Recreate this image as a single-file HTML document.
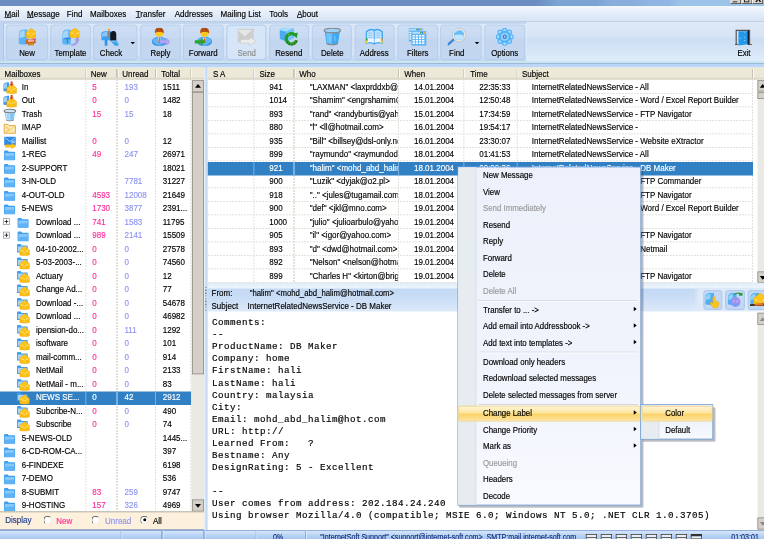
<!DOCTYPE html>
<html lang="en"><head><meta charset="utf-8"><title>Mail client</title>
<style>
html,body{margin:0;padding:0;background:#fff;overflow:hidden}
body{width:764px;height:539px;position:relative}
#app{position:absolute;left:0;top:0;width:1018.67px;height:718.67px;transform:scale(0.75);transform-origin:0 0;
 overflow:hidden;background:#bcd4f2;-webkit-text-stroke:0.22px currentColor;font-family:"Liberation Sans",sans-serif;font-size:11px;color:#000}
.abs{position:absolute;box-sizing:border-box}
.abs svg{display:block}
.titlebar{background:linear-gradient(90deg,#6b8cc0 0%,#6b8cc0 70%,#7ba4d4 73%,#7ba4d4 78%,#89aedc 80%,#89aedc 83%,#90b6e4 85%,#90b6e4 87.5%,#9cc4e9 89%,#9cc4e9 100%)}
.winbtn{background:#d6d2c8;border:1px solid #fff;border-right-color:#404040;border-bottom-color:#404040}
.menubar{background:linear-gradient(180deg,#f5f9fe 0%,#e6eefa 40%,#d8e4f4 93%,#afc3dd 96%)}
.mtxt{font-size:11.4px;transform:scaleX(.94);transform-origin:0 50%;white-space:nowrap;color:#000}
.toolbar{background:linear-gradient(180deg,#dfe9f7 0%,#d7e4f5 38%,#cedef2 41%,#d6e6f7 75%,#e0eefb 100%)}
.tbgroup{border-left:1px solid #a5c1e6;border-right:1px solid #e4eefa;border-radius:3px;background:linear-gradient(180deg,#c3d7f0 0,#bdd0e8 2.6px,#dee9f7 3px,#dce7f6 4.2px,#d9e5f5 38%,#d3e1f3 42%,#d6e3f5 80%,#c6d8ef 96%,#c3d5ec 100%)}
.tbgap{background:linear-gradient(180deg,#c6e9f0 0,#c6e9f0 1.5px,#9fb6d6 1.8px,#9fb6d6 3.2px,#bcd6fa 3.6px,#bcd6fa 100%)}
.tbtn{border:1px solid #a9c6ec;border-radius:4px;background:linear-gradient(180deg,#cddef4 0%,#c8daf3 36%,#c2d6f0 40%,#c4d7f1 100%)}
.tbtn.dis{background:#d6e5f7;border-color:#9fc3f0}
.tbtn.dis .tlabel{color:#8c8c8c}
.tlabel{font-size:11.4px;transform:scaleX(.92);transform-origin:50% 50%;text-align:center;white-space:nowrap;height:14px;line-height:14px}
.ticon{width:24px;height:24px}
.darr{width:0;height:0;border:3px solid transparent;border-top:3.6px solid #000;border-bottom:0}
.lhead{background:#ece9d8;border-bottom:1.4px solid #cbc7b8;box-shadow:inset 0 -2px 0 #e2dfcf}
.htxt,.rtxt{font-size:12.2px;transform:scaleX(.875);transform-origin:0 50%;white-space:nowrap}
.clip{overflow:hidden}
.cnew{color:#ff2d9b}
.cunr{color:#8d95f0}
.vdot{background:repeating-linear-gradient(180deg,#dad8ce 0,#dad8ce 2.6px,#fff 2.6px,#fff 4px)}
.hdot{background:repeating-linear-gradient(90deg,#dad8ce 0,#dad8ce 2.6px,#fff 2.6px,#fff 4px)}
.plus{border:1px solid #8a98ad;background:#fff}
.plus i{position:absolute;background:#000;display:block}
.sbtrack{background:#ebe9e4}
.sbbtn{background:#d4d0c8;border:1px solid #8c8a84}
.sbbtn b{position:absolute;left:2.5px;top:4.4px;width:0;height:0;border:4.3px solid transparent}
.sbbtn b.up{border-bottom:5.2px solid #000;border-top:0}
.sbbtn b.dn{border-top:5.2px solid #000;border-bottom:0;top:5px}
.dispbar{background:#fdf0dc;border-top:1.4px solid #9f9b8c;border-bottom:1.4px solid #4f6fae}
.dtxt{font-size:12.2px;transform:scaleX(.875);transform-origin:0 50%;white-space:nowrap}
.radio{border-radius:50%;background:#fff;border:1.4px solid #4a4a4a;border-right-color:#e4e0d4;border-bottom-color:#e4e0d4;transform:rotate(0deg)}
.radio i{position:absolute;left:2.2px;top:2.2px;width:4px;height:4px;border-radius:50%;background:#000;display:block}
.vsplit{background:linear-gradient(90deg,#eff4fb 0%,#d3e1f4 40%,#c6d9f1 65%,#dde8f6 100%)}
.hsplit{background:linear-gradient(180deg,#e3ecf6,#edf4fc)}
.msghead{background:linear-gradient(90deg,rgba(224,235,249,0) 87.3%,#dfeaf8 88.3%),linear-gradient(180deg,#c2d8f5 0%,#cbdef6 45%,#dce9f9 100%)}
.hbtn{border:1px solid #9cbce8;border-radius:3px;background:#c3d8f4}
.body{margin:0;font-family:"Liberation Mono",monospace;font-size:12.3px;letter-spacing:0.62px;line-height:16.05px;color:#000;white-space:pre}
.status{background:linear-gradient(180deg,#d6e6fa 0%,#bdd6f5 45%,#a4c6f1 100%);border-top:1px solid #7f9fd2}
.stxt{font-size:11.4px;transform:scaleX(.83);transform-origin:0 50%;white-space:nowrap;color:#15307a;line-height:13px}
.sicon{border:1px solid #333;background:#e8eef6}
.sicon i{position:absolute;left:0;top:3px;right:0;height:1px;background:#333;display:block}
.sicon.last{border-top-width:3px}
.mshadow{background:rgba(60,70,90,.35);border-radius:2px;filter:blur(1px)}
.cmenu{background:linear-gradient(180deg,#ecf1fb 0%,#eef3fc 50%,#f8fafe 100%);border:1.2px solid #6b9bd8}
.cgutter{background:#e6ecef;border-right:1px solid #d4dbe4}
.ctxt{font-size:11.4px;transform:scaleX(.92);transform-origin:0 50%;white-space:nowrap}
.carr{width:0;height:0;border:3.6px solid transparent;border-left:4px solid #000;border-right:0}
.chl{border:1px solid #f3cf73;border-radius:2px;background:linear-gradient(180deg,#fef5d4 0%,#fde59f 45%,#fbd367 55%,#fce4a0 100%)}

</style></head><body>
<div id="app">
<div class="abs titlebar" style="left:0px;top:0px;width:1018.67px;height:8.27px;"></div>
<div class="abs winbtn" style="left:974px;top:-8px;width:14px;height:13.33px;"></div>
<div class="abs winbtn" style="left:988.67px;top:-8px;width:14px;height:13.33px;"></div>
<div class="abs winbtn" style="left:1003.33px;top:-8px;width:14px;height:13.33px;"></div>
<div class="abs" style="left:977.33px;top:1.6px;width:6px;height:1.87px;background:#000"></div>
<div class="abs" style="left:992px;top:-4px;width:6.67px;height:7.47px;border:1px solid #000;box-sizing:border-box"></div>
<div class="abs" style="left:1007.33px;top:-7.33px;font:bold 11px 'Liberation Sans',sans-serif;color:#000">X</div>
<div class="abs menubar" style="left:0px;top:8px;width:1018.67px;height:20.93px;"></div>
<div class="abs mtxt" style="left:5.6px;top:9px;height:18px;line-height:18px"><u>M</u>ail</div>
<div class="abs mtxt" style="left:36px;top:9px;height:18px;line-height:18px"><u>M</u>essage</div>
<div class="abs mtxt" style="left:88.67px;top:9px;height:18px;line-height:18px">Find</div>
<div class="abs mtxt" style="left:120.4px;top:9px;height:18px;line-height:18px">Mailboxes</div>
<div class="abs mtxt" style="left:180.67px;top:9px;height:18px;line-height:18px"><u>T</u>ransfer</div>
<div class="abs mtxt" style="left:233.33px;top:9px;height:18px;line-height:18px">Addresses</div>
<div class="abs mtxt" style="left:294px;top:9px;height:18px;line-height:18px">Mailing List</div>
<div class="abs mtxt" style="left:359.07px;top:9px;height:18px;line-height:18px">Tools</div>
<div class="abs mtxt" style="left:396px;top:9px;height:18px;line-height:18px"><u>A</u>bout</div>
<div class="abs toolbar" style="left:0px;top:28.93px;width:1018.67px;height:53.33px;"></div>
<div class="abs" style="left:0px;top:28.93px;width:4.8px;height:53.33px;background:#bdd4f2"></div>
<div class="abs tbgroup" style="left:4.4px;top:28.93px;width:698.93px;height:53.33px;"></div>
<div class="abs tbgap" style="left:0px;top:82.27px;width:1018.67px;height:7.47px;"></div>
<div class="abs tbtn" style="left:8.4px;top:33.2px;width:55.2px;height:47.07px;"><div class="abs ticon" style="left:14.6px;top:2.67px"><svg width="24" height="24" viewBox="0 0 24 24"><path d="M2 5 Q4 2 8 2.2 L12 2.2 L12.6 22 Q7 23.5 1.2 21.6 Q.2 14 2 5Z" fill="#5cb4f5"/><path d="M2.6 6 Q5 3.2 9 3.4 L9 12 Q5 13 1.6 14Z" fill="#a2d7fb"/><path d="M11.000000000000002 5.949999999999999 L17.6 1.0 L24.200000000000003 5.949999999999999 L24.200000000000003 12.879999999999999 Q17.6 14.86 11.000000000000002 12.879999999999999 Z" fill="#fdc51c" stroke="#f2a900" stroke-width=".8"/><path d="M12.000000000000002 6.9399999999999995 L17.6 9.91 L23.200000000000003 6.9399999999999995" fill="none" stroke="#fde27a" stroke-width="1.3"/><path d="M12.200000000000001 12.549999999999999 L17.6 8.26 L23.000000000000004 12.549999999999999" fill="none" stroke="#f4a600" stroke-width="1"/><path d="M10 17 L13 14.5 L16.5 16 L20 14 L23 16.8 L24 20 L21 21.2 L20.5 24 L17 23 L14.5 24.5 L13.4 21.6 L10 21Z" fill="#c8691e"/><path d="M13 16 L21 15.5 L21.4 18.4 L13.4 19Z" fill="#f6b4a4"/><circle cx="22.6" cy="15.6" r="1.2" fill="#f020a0"/><circle cx="16" cy="21.4" r=".9" fill="#f8d020"/><circle cx="19" cy="21.8" r=".9" fill="#f8d020"/></svg></div><div class="abs tlabel" style="left:-13.4px;width:80px;top:29.73px">New</div></div>
<div class="abs tbtn" style="left:67.07px;top:33.2px;width:53.73px;height:47.07px;"><div class="abs ticon" style="left:13.87px;top:2.67px"><svg width="24" height="24" viewBox="0 0 24 24"><path d="M2 5 Q4 2 8 2.2 L12 2.2 L12.6 22 Q7 23.5 1.2 21.6 Q.2 14 2 5Z" fill="#5cb4f5"/><path d="M2.6 6 Q5 3.2 9 3.4 L9 12 Q5 13 1.6 14Z" fill="#a2d7fb"/><path d="M4 14.6h8M8 14.6v6" stroke="#2f86d8" stroke-width="1.6" fill="none"/><path d="M11.200000000000001 5.35 L17.8 0.40000000000000036 L24.4 5.35 L24.4 12.280000000000001 Q17.8 14.26 11.200000000000001 12.280000000000001 Z" fill="#fdc51c" stroke="#f2a900" stroke-width=".8"/><path d="M12.200000000000001 6.34 L17.8 9.309999999999999 L23.4 6.34" fill="none" stroke="#fde27a" stroke-width="1.3"/><path d="M12.4 11.95 L17.8 7.66 L23.2 11.95" fill="none" stroke="#f4a600" stroke-width="1"/><path d="M13 22.6 Q19 22 20.4 16.4 L18 16.6 L21.6 12.6 L24 17 L22.4 16.8 Q21.6 23.6 13.6 24.4Z" fill="#a89af0" stroke="#8f80e0" stroke-width=".5"/></svg></div><div class="abs tlabel" style="left:-14.13px;width:80px;top:29.73px">Template</div></div>
<div class="abs tbtn" style="left:124px;top:33.2px;width:59.47px;height:47.07px;"><div class="abs ticon" style="left:9.27px;top:2.67px"><svg width="24" height="24" viewBox="0 0 24 24"><path d="M1 9 Q1 4.6 6 4.6 L14 4.6 L14 16.6 L1.4 16.6Z" fill="#3f9ff0"/><path d="M2 9 Q2.4 5.8 6 5.6 L9 5.6 L9 11 L2 12Z" fill="#86c8fa"/><rect x="5.6" y="16" width="3.6" height="8.4" fill="#2f94ec"/><path d="M13 8 Q13.4 4.2 17.6 4.4 Q21 4.8 21 9 L21 17.4 L13 17.4Z" fill="#111820"/><path d="M13 17 L21 17 L26.5 22.4 Q23 25.6 19 24Z" fill="#3ea2f0"/><path d="M15 18 L20.4 18 L24.6 22.2" stroke="#9ad4fb" stroke-width="1" fill="none"/><rect x="10.6" y="1.2" width="1.5" height="11.6" fill="#e8641c"/><rect x="10.2" y=".2" width="2.4" height="2" fill="#f8d020"/></svg></div><div class="abs tlabel" style="left:-17.13px;width:80px;top:29.73px">Check</div><div class="abs darr" style="left:49.33px;top:21.6px"></div></div>
<div class="abs tbtn" style="left:186.8px;top:33.2px;width:54.13px;height:47.07px;"><div class="abs ticon" style="left:14.07px;top:2.67px"><svg width="24" height="24" viewBox="0 0 24 24"><ellipse cx="10.4" cy="18.4" rx="10" ry="6.4" fill="#2f8fe8"/><path d="M1.4 18 Q3 13 8.6 13 L10.4 20 L12.2 13 Q18 13 19.6 18 Q15 23 10.4 23 Q5 23 1.4 18Z" fill="#62b8f6"/><path d="M8.4 13 L12.4 13 L10.4 20Z" fill="#eaf4fd"/><path d="M9.8 13.4h1.4l.4 6-1.1 1.6-1.1-1.6z" fill="#e0641a"/><circle cx="10.4" cy="6.6" r="5.6" fill="#fdc81e"/><path d="M4.4 7.4 Q3.8 -.4 10.4 -.4 Q17.2 -.4 16.4 7.6 Q14 5 10.4 5.8 Q7 5 4.4 7.4Z" fill="#b8521a"/><circle cx="8" cy="2.6" r=".7" fill="#7a3a12"/><circle cx="12.4" cy="1.8" r=".7" fill="#7a3a12"/><circle cx="13.6" cy="4" r=".6" fill="#7a3a12"/><path d="M10.6 16.4 L19 16.4 L19 13.6 L25.6 18.6 L19 23.6 L19 20.8 L10.6 20.8Z" fill="#b0a4f4" stroke="#8f86e0" stroke-width=".6"/><rect x="10" y="15.6" width="1" height="6.4" fill="#8a8fa0"/></svg></div><div class="abs tlabel" style="left:-13.93px;width:80px;top:29.73px">Reply</div></div>
<div class="abs tbtn" style="left:244.4px;top:33.2px;width:53.87px;height:47.07px;"><div class="abs ticon" style="left:13.93px;top:2.67px"><svg width="24" height="24" viewBox="0 0 24 24"><g transform="translate(3.4 0)"><ellipse cx="10.4" cy="18.4" rx="10" ry="6.4" fill="#2f8fe8"/><path d="M1.4 18 Q3 13 8.6 13 L10.4 20 L12.2 13 Q18 13 19.6 18 Q15 23 10.4 23 Q5 23 1.4 18Z" fill="#62b8f6"/><path d="M8.4 13 L12.4 13 L10.4 20Z" fill="#eaf4fd"/><path d="M9.8 13.4h1.4l.4 6-1.1 1.6-1.1-1.6z" fill="#e0641a"/><circle cx="10.4" cy="6.6" r="5.6" fill="#fdc81e"/><path d="M4.4 7.4 Q3.8 -.4 10.4 -.4 Q17.2 -.4 16.4 7.6 Q14 5 10.4 5.8 Q7 5 4.4 7.4Z" fill="#b8521a"/><circle cx="8" cy="2.6" r=".7" fill="#7a3a12"/><circle cx="12.4" cy="1.8" r=".7" fill="#7a3a12"/><circle cx="13.6" cy="4" r=".6" fill="#7a3a12"/></g><path d="M.6 16.6 L8.6 16.6 L8.6 13.8 L15.2 18.8 L8.6 23.8 L8.6 21 L.6 21Z" fill="#27a82a"/><circle cx="9" cy="18.8" r=".7" fill="#8a5a2a"/><circle cx="11.6" cy="17.4" r=".6" fill="#8a5a2a"/></svg></div><div class="abs tlabel" style="left:-14.07px;width:80px;top:29.73px">Forward</div></div>
<div class="abs tbtn dis" style="left:301.73px;top:33.2px;width:53.6px;height:47.07px;"><div class="abs ticon" style="left:13.8px;top:2.67px"><svg width="24" height="24" viewBox="0 0 24 24"><path d="M-2.4 2 L21.2 2 L21.2 19.6 L-2.4 19.6Z" fill="#cfcfcf"/><path d="M-2.4 2 L9.4 12.4 L21.2 2Z" fill="#e6e6e6" stroke="#bcbcbc" stroke-width=".8"/><path d="M-2.4 19.6 L7 10.6M21.2 19.6 L12 10.6" stroke="#bdbdbd" stroke-width=".8"/><path d="M3.6 15.6 L15.6 15.6 L15.6 12 L24.4 18 L15.6 24 L15.6 20.4 L3.6 20.4Z" fill="#ececec" stroke="#c4c4c4" stroke-width=".7"/></svg></div><div class="abs tlabel" style="left:-14.2px;width:80px;top:29.73px">Send</div></div>
<div class="abs tbtn" style="left:358.67px;top:33.2px;width:53.6px;height:47.07px;"><div class="abs ticon" style="left:13.8px;top:2.67px"><svg width="24" height="24" viewBox="0 0 24 24"><path d="M-1.4 2.4 L7 -.8 L18.6 1 L18.6 14 L8.6 18.4 L-.4 14.6Z" fill="#4aaaf3"/><path d="M-1.4 2.4 L8.4 5.4 L18.6 1 L7 -.8Z" fill="#a6dbfc"/><path d="M8.4 5.4 L8.6 18.4 L18.6 14 L18.6 1Z" fill="#74c4f9"/><path d="M20.4 9.6 A7 7 0 1 0 22.4 16.6" fill="none" stroke="#1f9c2a" stroke-width="4.4"/><path d="M16.4 8.2 L24.4 6.4 L22.6 14Z" fill="#1f9c2a"/><circle cx="10" cy="19.6" r=".8" fill="#5a3a1a"/><circle cx="12.6" cy="22.4" r=".8" fill="#5a3a1a"/><circle cx="16.4" cy="23.2" r=".8" fill="#5a3a1a"/><circle cx="20" cy="21.6" r=".8" fill="#5a3a1a"/><circle cx="22.6" cy="18.6" r=".8" fill="#5a3a1a"/><circle cx="12" cy="9" r=".7" fill="#c8e020"/></svg></div><div class="abs tlabel" style="left:-14.2px;width:80px;top:29.73px">Resend</div></div>
<div class="abs tbtn" style="left:416px;top:33.2px;width:53.07px;height:47.07px;"><div class="abs ticon" style="left:13.53px;top:2.67px"><svg width="24" height="24" viewBox="0 0 24 24"><path d="M1.6 3.6 L22.4 3.6 L19.6 21.4 Q12 24.6 4.4 21.4Z" fill="#40a8f2"/><path d="M3.6 6 L12 7 L11.4 22 Q7 21.6 5 20.6Z" fill="#6cc2f8"/><ellipse cx="12" cy="3.6" rx="11" ry="3" fill="#9ad4fa" stroke="#8a8a8a" stroke-width="1.7"/><path d="M4.4 20.8 Q12 24.8 19.6 20.8" stroke="#8a8a8a" stroke-width="1.8" fill="none"/><path d="M8.4 10.4v8M15.6 10.4v8" stroke="#8fd0fa" stroke-width="1"/></svg></div><div class="abs tlabel" style="left:-14.47px;width:80px;top:29.73px">Delete</div></div>
<div class="abs tbtn" style="left:472.53px;top:33.2px;width:53.6px;height:47.07px;"><div class="abs ticon" style="left:13.8px;top:2.67px"><svg width="24" height="24" viewBox="0 0 24 24"><path d="M.6 5 Q6 -.6 12 2.4 Q18 -.6 23.6 5 L23.6 21.6 Q18 19.6 12 22.4 Q6 19.6 .6 21.6Z" fill="#3fa4f2"/><path d="M2.2 6 Q7 1.6 11.4 4.4 L11.4 20 Q7 18.4 2.2 19.6Z" fill="#c2e0fa"/><path d="M21.8 6 Q17 1.6 12.6 4.4 L12.6 20 Q17 18.4 21.8 19.6Z" fill="#c2e0fa"/><path d="M2.2 14 L11.4 15 L11.4 20 Q7 18.4 2.2 19.6Z" fill="#eef7fe"/><path d="M21.8 14 L12.6 15 L12.6 20 Q17 18.4 21.8 19.6Z" fill="#eef7fe"/><path d="M4 7h5M4 10h5M4 13h5M15 7h5M15 10h5M15 13h5" stroke="#8cc6f7" stroke-width="1.2"/><rect x=".8" y="14" width="2.4" height="3.4" fill="#28a838"/><rect x=".8" y="17.2" width="2.6" height="3.4" fill="#fcd21c"/><rect x="20.8" y="14" width="2.4" height="3.4" fill="#f09a1c"/><rect x="20.6" y="17.2" width="2.6" height="3.4" fill="#fcd21c"/></svg></div><div class="abs tlabel" style="left:-14.2px;width:80px;top:29.73px">Address</div></div>
<div class="abs tbtn" style="left:529.6px;top:33.2px;width:54px;height:47.07px;"><div class="abs ticon" style="left:14px;top:2.67px"><svg width="24" height="24" viewBox="0 0 24 24"><rect x="-0.6" y="0.2" width="19" height="18" rx="1" fill="#56b2f6"/><rect x="0.4" y="1.2" width="17" height="2.6" fill="#b6defc"/><rect x="9.999999999999998" y="1.4" width="1.8" height="2" fill="#2ca03c"/><rect x="12.599999999999998" y="1.4" width="1.6" height="2" fill="#2468d8"/><rect x="14.999999999999998" y="1.4" width="1.8" height="2" fill="#f0a020"/><rect x="0.90" y="5.40" width="2.80" height="1.80" fill="#fff"/><rect x="4.90" y="5.40" width="2.80" height="1.80" fill="#fff"/><rect x="8.90" y="5.40" width="2.80" height="1.80" fill="#fff"/><rect x="12.90" y="5.40" width="2.80" height="1.80" fill="#fff"/><rect x="0.90" y="8.30" width="2.80" height="1.80" fill="#fff"/><rect x="4.90" y="8.30" width="2.80" height="1.80" fill="#fff"/><rect x="8.90" y="8.30" width="2.80" height="1.80" fill="#fff"/><rect x="12.90" y="8.30" width="2.80" height="1.80" fill="#fff"/><rect x="0.90" y="11.20" width="2.80" height="1.80" fill="#fff"/><rect x="4.90" y="11.20" width="2.80" height="1.80" fill="#fff"/><rect x="8.90" y="11.20" width="2.80" height="1.80" fill="#fff"/><rect x="12.90" y="11.20" width="2.80" height="1.80" fill="#fff"/><rect x="0.90" y="14.10" width="2.80" height="1.80" fill="#fff"/><rect x="4.90" y="14.10" width="2.80" height="1.80" fill="#fff"/><rect x="8.90" y="14.10" width="2.80" height="1.80" fill="#fff"/><rect x="12.90" y="14.10" width="2.80" height="1.80" fill="#fff"/><rect x="3.6" y="4.4" width="20" height="19.6" rx="1" fill="#56b2f6"/><rect x="4.6" y="5.4" width="18" height="2.6" fill="#b6defc"/><rect x="15.200000000000001" y="5.6000000000000005" width="1.8" height="2" fill="#2ca03c"/><rect x="17.8" y="5.6000000000000005" width="1.6" height="2" fill="#2468d8"/><rect x="20.200000000000003" y="5.6000000000000005" width="1.8" height="2" fill="#f0a020"/><rect x="5.10" y="9.60" width="3.05" height="2.20" fill="#fff"/><rect x="9.35" y="9.60" width="3.05" height="2.20" fill="#fff"/><rect x="13.60" y="9.60" width="3.05" height="2.20" fill="#fff"/><rect x="17.85" y="9.60" width="3.05" height="2.20" fill="#fff"/><rect x="5.10" y="12.90" width="3.05" height="2.20" fill="#fff"/><rect x="9.35" y="12.90" width="3.05" height="2.20" fill="#fff"/><rect x="13.60" y="12.90" width="3.05" height="2.20" fill="#fff"/><rect x="17.85" y="12.90" width="3.05" height="2.20" fill="#fff"/><rect x="5.10" y="16.20" width="3.05" height="2.20" fill="#fff"/><rect x="9.35" y="16.20" width="3.05" height="2.20" fill="#fff"/><rect x="13.60" y="16.20" width="3.05" height="2.20" fill="#fff"/><rect x="17.85" y="16.20" width="3.05" height="2.20" fill="#fff"/><rect x="5.10" y="19.50" width="3.05" height="2.20" fill="#fff"/><rect x="9.35" y="19.50" width="3.05" height="2.20" fill="#fff"/><rect x="13.60" y="19.50" width="3.05" height="2.20" fill="#fff"/><rect x="17.85" y="19.50" width="3.05" height="2.20" fill="#fff"/></svg></div><div class="abs tlabel" style="left:-14px;width:80px;top:29.73px">Filters</div></div>
<div class="abs tbtn" style="left:587.2px;top:33.2px;width:54.8px;height:47.07px;"><div class="abs ticon" style="left:9px;top:2.67px"><svg width="24" height="24" viewBox="0 0 24 24"><path d="M9.4 14.4 L-1 23.6" stroke="#c4c8d0" stroke-width="4.6" stroke-linecap="round"/><path d="M8.4 15.4 L-.6 23.2" stroke="#2f86e0" stroke-width="2.6" stroke-linecap="round"/><circle cx="15" cy="9.4" r="8.8" fill="#f0f0f0" stroke="#b8b8b8" stroke-width=".9"/><circle cx="15" cy="9.4" r="6.9" fill="#6cbcf7"/><path d="M8.4 10.4 Q15 7.4 21.6 10.4 Q20.4 16 15 16.3 Q9.6 16 8.4 10.4Z" fill="#c2e5fc"/><path d="M9.6 6.2 Q12 2.8 16 2.8" stroke="#b4defb" stroke-width="1.4" fill="none"/></svg></div><div class="abs tlabel" style="left:-19px;width:80px;top:29.73px">Find</div><div class="abs darr" style="left:44.67px;top:21.6px"></div></div>
<div class="abs tbtn" style="left:645.87px;top:33.2px;width:54.13px;height:47.07px;"><div class="abs ticon" style="left:14.07px;top:2.67px"><svg width="24" height="24" viewBox="0 0 24 24"><circle cx="20.60" cy="12.00" r="3.5" fill="#4fb0f6"/><circle cx="20.60" cy="12.00" r="1.9" fill="#b4e0fc"/><circle cx="18.08" cy="18.08" r="3.5" fill="#4fb0f6"/><circle cx="18.08" cy="18.08" r="1.9" fill="#b4e0fc"/><circle cx="12.00" cy="20.60" r="3.5" fill="#4fb0f6"/><circle cx="12.00" cy="20.60" r="1.9" fill="#b4e0fc"/><circle cx="5.92" cy="18.08" r="3.5" fill="#4fb0f6"/><circle cx="5.92" cy="18.08" r="1.9" fill="#b4e0fc"/><circle cx="3.40" cy="12.00" r="3.5" fill="#4fb0f6"/><circle cx="3.40" cy="12.00" r="1.9" fill="#b4e0fc"/><circle cx="5.92" cy="5.92" r="3.5" fill="#4fb0f6"/><circle cx="5.92" cy="5.92" r="1.9" fill="#b4e0fc"/><circle cx="12.00" cy="3.40" r="3.5" fill="#4fb0f6"/><circle cx="12.00" cy="3.40" r="1.9" fill="#b4e0fc"/><circle cx="18.08" cy="5.92" r="3.5" fill="#4fb0f6"/><circle cx="18.08" cy="5.92" r="1.9" fill="#b4e0fc"/><circle cx="12" cy="12" r="8" fill="#4fb0f6"/><circle cx="12" cy="12" r="5.4" fill="#96d0fa"/><circle cx="12" cy="12" r="3" fill="#2f8ee8"/><circle cx="12" cy="12" r="1.2" fill="#c8c0c0"/></svg></div><div class="abs tlabel" style="left:-13.93px;width:80px;top:29.73px">Options</div></div>
<div class="abs ticon" style="left:979.2px;top:38px"><svg width="24" height="24" viewBox="0 0 24 24"><path d="M2.6 22 L2.6 2.6 L20.4 2.6 L20.4 22" fill="none" stroke="#555" stroke-width="1.6"/><path d="M1 21.4h4M18.4 21.4h5" stroke="#555" stroke-width="1.4"/><path d="M5.6 3.6 L18.6 3.6 L18.6 21 L5.6 22.6Z" fill="#2298ea"/><rect x="17.8" y="2.6" width="1.8" height="19" fill="#0a1a2a"/><circle cx="8" cy="13" r=".7" fill="#bfe4fc"/><circle cx="14" cy="11.6" r=".7" fill="#bfe4fc"/><circle cx="14" cy="16" r=".7" fill="#bfe4fc"/><circle cx="13.6" cy="5.6" r=".6" fill="#bfe4fc"/></svg></div>
<div class="abs tlabel" style="left:952px;width:80px;top:63.2px">Exit</div>
<div class="abs" style="left:0px;top:89.73px;width:272px;height:592.27px;background:#fff"></div>
<div class="abs lhead" style="left:0px;top:89.73px;width:272px;height:16.4px;"></div>
<div class="abs htxt" style="left:6.13px;top:89px;height:18px;line-height:18px">Mailboxes</div>
<div class="abs htxt" style="left:121.33px;top:89px;height:18px;line-height:18px">New</div>
<div class="abs htxt" style="left:163.47px;top:89px;height:18px;line-height:18px">Unread</div>
<div class="abs htxt" style="left:215.33px;top:89px;height:18px;line-height:18px">Toltal</div>
<div class="abs" style="left:114.4px;top:92px;width:1.07px;height:12px;background:#b9b6a6"></div>
<div class="abs" style="left:115.47px;top:92px;width:0.93px;height:12px;background:#fff"></div>
<div class="abs vdot" style="left:114.4px;top:106.4px;width:1.07px;height:575.6px;"></div>
<div class="abs" style="left:155.47px;top:92px;width:1.07px;height:12px;background:#b9b6a6"></div>
<div class="abs" style="left:156.53px;top:92px;width:0.93px;height:12px;background:#fff"></div>
<div class="abs vdot" style="left:155.47px;top:106.4px;width:1.07px;height:575.6px;"></div>
<div class="abs" style="left:206.67px;top:92px;width:1.07px;height:12px;background:#b9b6a6"></div>
<div class="abs" style="left:207.73px;top:92px;width:0.93px;height:12px;background:#fff"></div>
<div class="abs vdot" style="left:206.67px;top:106.4px;width:1.07px;height:575.6px;"></div>
<div class="abs" style="left:254.13px;top:92px;width:1.07px;height:12px;background:#b9b6a6"></div>
<div class="abs" style="left:255.2px;top:92px;width:0.93px;height:12px;background:#fff"></div>
<div class="abs vdot" style="left:254.13px;top:106.4px;width:1.07px;height:575.6px;"></div>
<div class="abs" style="left:4.4px;top:107.6px;width:18.4px;height:18.4px"><svg width="100%" height="100%" viewBox="0 0 16 16"><path d="M.6 3.6 Q2 1.4 5 1.4 L7 1.4 L7 12 Q3.6 12.6 .4 11.6Z" fill="#3f9cf0"/><path d="M1.2 4.2 Q2.4 2.6 4.6 2.4 L4.6 8 L.9 9Z" fill="#9ad2fa"/><path d="M4.4 8.08 L10 3.5999999999999996 L15.6 8.08 L15.6 13.959999999999999 Q10 15.36 4.4 13.959999999999999Z" fill="#fdc51c" stroke="#f0a400" stroke-width=".6"/><path d="M5.2 13.12 L10 9.479999999999999 L14.799999999999999 13.12" fill="none" stroke="#f3a800" stroke-width=".9"/><path d="M5.2 8.639999999999999 L10 10.879999999999999 L14.799999999999999 8.639999999999999" fill="none" stroke="#fde68a" stroke-width=".9"/><path d="M8.8 .6h2.4v2.8h1.4l-2.6 2.8-2.6-2.8h1.4z" fill="#d8481c"/></svg></div>
<div class="abs rtxt " style="left:29.33px;top:107px;height:18px;line-height:18px">In</div>
<div class="abs rtxt cnew" style="left:123.2px;top:107px;height:18px;line-height:18px">5</div>
<div class="abs rtxt cunr" style="left:165.6px;top:107px;height:18px;line-height:18px">193</div>
<div class="abs rtxt " style="left:216.53px;top:107px;height:18px;line-height:18px">1511</div>
<div class="abs" style="left:4.4px;top:125.6px;width:18.4px;height:18.4px"><svg width="100%" height="100%" viewBox="0 0 16 16"><path d="M.6 3.6 Q2 1.4 5 1.4 L7 1.4 L7 12 Q3.6 12.6 .4 11.6Z" fill="#3f9cf0"/><path d="M1.2 4.2 Q2.4 2.6 4.6 2.4 L4.6 8 L.9 9Z" fill="#9ad2fa"/><path d="M4.4 8.08 L10 3.5999999999999996 L15.6 8.08 L15.6 13.959999999999999 Q10 15.36 4.4 13.959999999999999Z" fill="#fdc51c" stroke="#f0a400" stroke-width=".6"/><path d="M5.2 13.12 L10 9.479999999999999 L14.799999999999999 13.12" fill="none" stroke="#f3a800" stroke-width=".9"/><path d="M5.2 8.639999999999999 L10 10.879999999999999 L14.799999999999999 8.639999999999999" fill="none" stroke="#fde68a" stroke-width=".9"/><path d="M8.8 .6h2.4v2.8h1.4l-2.6 2.8-2.6-2.8h1.4z" fill="#d8481c"/></svg></div>
<div class="abs rtxt " style="left:29.33px;top:124px;height:18px;line-height:18px">Out</div>
<div class="abs rtxt cnew" style="left:123.2px;top:124px;height:18px;line-height:18px">0</div>
<div class="abs rtxt cunr" style="left:165.6px;top:124px;height:18px;line-height:18px">0</div>
<div class="abs rtxt " style="left:216.53px;top:124px;height:18px;line-height:18px">1482</div>
<div class="abs" style="left:4.4px;top:143.6px;width:18.4px;height:18.4px"><svg width="100%" height="100%" viewBox="0 0 16 16"><path d="M1.6 3.4 L14.4 3.4 L12.6 14 Q8 16 3.4 14Z" fill="#8cccf8"/><path d="M3 5.6 L8 6.2 L7.6 14.6 Q5 14.2 3.8 13.6Z" fill="#bfe3fb"/><ellipse cx="8" cy="3.4" rx="6.8" ry="2" fill="#cfe9fc" stroke="#7c7c7c" stroke-width="1.2"/><path d="M3.4 13.8 Q8 16.2 12.6 13.8" stroke="#8a8a8a" stroke-width="1.2" fill="none"/><path d="M5.8 7v5.6M10.2 7v5.6" stroke="#5fb2f4" stroke-width=".8"/></svg></div>
<div class="abs rtxt " style="left:29.33px;top:143px;height:18px;line-height:18px">Trash</div>
<div class="abs rtxt cnew" style="left:123.2px;top:143px;height:18px;line-height:18px">15</div>
<div class="abs rtxt cunr" style="left:165.6px;top:143px;height:18px;line-height:18px">15</div>
<div class="abs rtxt " style="left:216.53px;top:143px;height:18px;line-height:18px">18</div>
<div class="abs" style="left:4.4px;top:161.6px;width:18.4px;height:18.4px"><svg width="100%" height="100%" viewBox="0 0 16 16"><path d="M1.4 3.2 L5.6 3.2 L7 4.8 L14.4 4.8 L14.4 13.6 L1.4 13.6Z" fill="#fbeab0" stroke="#e9a63a" stroke-width="1.1"/><path d="M3 6.4 L8 9.6 L3 12.4" fill="none" stroke="#f0b64c" stroke-width="1"/><path d="M8 9.6 L14 5.6" stroke="#f3c873" stroke-width=".9"/></svg></div>
<div class="abs rtxt " style="left:29.33px;top:160px;height:18px;line-height:18px">IMAP</div>
<div class="abs" style="left:4.4px;top:179.6px;width:18.4px;height:18.4px"><svg width="100%" height="100%" viewBox="0 0 16 16"><rect x="1.4" y="2" width="13.4" height="10" rx="1" fill="#2b8aea"/><path d="M2.4 3.2 L8.2 7.6 L13.8 3.2" fill="none" stroke="#9bd0fb" stroke-width="1.1"/><rect x="9.6" y="6.4" width="4.4" height="3" fill="#8cc6f8"/><path d="M2.6 11.4h7.4v-2.2l5 3.6-5 3.6v-2.2h-7.4z" fill="#fcc61c" stroke="#e8a400" stroke-width=".5"/></svg></div>
<div class="abs rtxt " style="left:29.33px;top:179px;height:18px;line-height:18px">Maillist</div>
<div class="abs rtxt cnew" style="left:123.2px;top:179px;height:18px;line-height:18px">0</div>
<div class="abs rtxt cunr" style="left:165.6px;top:179px;height:18px;line-height:18px">0</div>
<div class="abs rtxt " style="left:216.53px;top:179px;height:18px;line-height:18px">12</div>
<div class="abs" style="left:4.4px;top:197.6px;width:18.4px;height:18.4px"><svg width="100%" height="100%" viewBox="0 0 16 16"><g transform="translate(.3 .6) scale(.94)"><path d="M1 3 Q1 1.8 2.2 1.8 L5.4 1.8 L6.8 3.4 L13.4 3.4 Q14.6 3.4 14.6 4.6 L14.6 12.8 Q14.6 14 13.4 14 L2.2 14 Q1 14 1 12.8Z" fill="#3f9ef0"/><path d="M2 5 L13.6 5 L13.6 12.6 Q13.6 13 13.2 13 L2.4 13 Q2 13 2 12.6Z" fill="#86c9f9"/><path d="M2 9 L13.6 8 L13.6 12.6 Q13.6 13 13.2 13 L2.4 13 Q2 13 2 12.6Z" fill="#5fb3f5"/></g></svg></div>
<div class="abs rtxt " style="left:29.33px;top:196px;height:18px;line-height:18px">1-REG</div>
<div class="abs rtxt cnew" style="left:123.2px;top:196px;height:18px;line-height:18px">49</div>
<div class="abs rtxt cunr" style="left:165.6px;top:196px;height:18px;line-height:18px">247</div>
<div class="abs rtxt " style="left:216.53px;top:196px;height:18px;line-height:18px">26971</div>
<div class="abs" style="left:4.4px;top:215.6px;width:18.4px;height:18.4px"><svg width="100%" height="100%" viewBox="0 0 16 16"><g transform="translate(.3 .6) scale(.94)"><path d="M1 3 Q1 1.8 2.2 1.8 L5.4 1.8 L6.8 3.4 L13.4 3.4 Q14.6 3.4 14.6 4.6 L14.6 12.8 Q14.6 14 13.4 14 L2.2 14 Q1 14 1 12.8Z" fill="#3f9ef0"/><path d="M2 5 L13.6 5 L13.6 12.6 Q13.6 13 13.2 13 L2.4 13 Q2 13 2 12.6Z" fill="#86c9f9"/><path d="M2 9 L13.6 8 L13.6 12.6 Q13.6 13 13.2 13 L2.4 13 Q2 13 2 12.6Z" fill="#5fb3f5"/></g></svg></div>
<div class="abs rtxt " style="left:29.33px;top:215px;height:18px;line-height:18px">2-SUPPORT</div>
<div class="abs rtxt " style="left:216.53px;top:215px;height:18px;line-height:18px">18021</div>
<div class="abs" style="left:4.4px;top:233.6px;width:18.4px;height:18.4px"><svg width="100%" height="100%" viewBox="0 0 16 16"><g transform="translate(.3 .6) scale(.94)"><path d="M1 3 Q1 1.8 2.2 1.8 L5.4 1.8 L6.8 3.4 L13.4 3.4 Q14.6 3.4 14.6 4.6 L14.6 12.8 Q14.6 14 13.4 14 L2.2 14 Q1 14 1 12.8Z" fill="#3f9ef0"/><path d="M2 5 L13.6 5 L13.6 12.6 Q13.6 13 13.2 13 L2.4 13 Q2 13 2 12.6Z" fill="#86c9f9"/><path d="M2 9 L13.6 8 L13.6 12.6 Q13.6 13 13.2 13 L2.4 13 Q2 13 2 12.6Z" fill="#5fb3f5"/></g></svg></div>
<div class="abs rtxt " style="left:29.33px;top:232px;height:18px;line-height:18px">3-IN-OLD</div>
<div class="abs rtxt cunr" style="left:165.6px;top:232px;height:18px;line-height:18px">7781</div>
<div class="abs rtxt " style="left:216.53px;top:232px;height:18px;line-height:18px">31227</div>
<div class="abs" style="left:4.4px;top:251.6px;width:18.4px;height:18.4px"><svg width="100%" height="100%" viewBox="0 0 16 16"><g transform="translate(.3 .6) scale(.94)"><path d="M1 3 Q1 1.8 2.2 1.8 L5.4 1.8 L6.8 3.4 L13.4 3.4 Q14.6 3.4 14.6 4.6 L14.6 12.8 Q14.6 14 13.4 14 L2.2 14 Q1 14 1 12.8Z" fill="#3f9ef0"/><path d="M2 5 L13.6 5 L13.6 12.6 Q13.6 13 13.2 13 L2.4 13 Q2 13 2 12.6Z" fill="#86c9f9"/><path d="M2 9 L13.6 8 L13.6 12.6 Q13.6 13 13.2 13 L2.4 13 Q2 13 2 12.6Z" fill="#5fb3f5"/></g></svg></div>
<div class="abs rtxt " style="left:29.33px;top:251px;height:18px;line-height:18px">4-OUT-OLD</div>
<div class="abs rtxt cnew" style="left:123.2px;top:251px;height:18px;line-height:18px">4593</div>
<div class="abs rtxt cunr" style="left:165.6px;top:251px;height:18px;line-height:18px">12008</div>
<div class="abs rtxt " style="left:216.53px;top:251px;height:18px;line-height:18px">21649</div>
<div class="abs" style="left:4.4px;top:269.6px;width:18.4px;height:18.4px"><svg width="100%" height="100%" viewBox="0 0 16 16"><g transform="translate(.3 .6) scale(.94)"><path d="M1 3 Q1 1.8 2.2 1.8 L5.4 1.8 L6.8 3.4 L13.4 3.4 Q14.6 3.4 14.6 4.6 L14.6 12.8 Q14.6 14 13.4 14 L2.2 14 Q1 14 1 12.8Z" fill="#3f9ef0"/><path d="M2 5 L13.6 5 L13.6 12.6 Q13.6 13 13.2 13 L2.4 13 Q2 13 2 12.6Z" fill="#86c9f9"/><path d="M2 9 L13.6 8 L13.6 12.6 Q13.6 13 13.2 13 L2.4 13 Q2 13 2 12.6Z" fill="#5fb3f5"/></g></svg></div>
<div class="abs rtxt " style="left:29.33px;top:268px;height:18px;line-height:18px">5-NEWS</div>
<div class="abs rtxt cnew" style="left:123.2px;top:268px;height:18px;line-height:18px">1730</div>
<div class="abs rtxt cunr" style="left:165.6px;top:268px;height:18px;line-height:18px">3877</div>
<div class="abs rtxt " style="left:216.53px;top:268px;height:18px;line-height:18px">2391...</div>
<div class="abs" style="left:22.4px;top:287.6px;width:18.4px;height:18.4px"><svg width="100%" height="100%" viewBox="0 0 16 16"><g transform="translate(.3 .6) scale(.94)"><path d="M1 3 Q1 1.8 2.2 1.8 L5.4 1.8 L6.8 3.4 L13.4 3.4 Q14.6 3.4 14.6 4.6 L14.6 12.8 Q14.6 14 13.4 14 L2.2 14 Q1 14 1 12.8Z" fill="#3f9ef0"/><path d="M2 5 L13.6 5 L13.6 12.6 Q13.6 13 13.2 13 L2.4 13 Q2 13 2 12.6Z" fill="#86c9f9"/><path d="M2 9 L13.6 8 L13.6 12.6 Q13.6 13 13.2 13 L2.4 13 Q2 13 2 12.6Z" fill="#5fb3f5"/></g></svg></div>
<div class="abs plus" style="left:4.4px;top:291.47px;width:8.8px;height:8.8px;"><i style="left:1px;top:2.9px;width:4.8px;height:1px"></i><i style="left:2.9px;top:1px;width:1px;height:4.8px"></i></div>
<div class="abs rtxt " style="left:47.73px;top:287px;height:18px;line-height:18px">Download ...</div>
<div class="abs rtxt cnew" style="left:123.2px;top:287px;height:18px;line-height:18px">741</div>
<div class="abs rtxt cunr" style="left:165.6px;top:287px;height:18px;line-height:18px">1583</div>
<div class="abs rtxt " style="left:216.53px;top:287px;height:18px;line-height:18px">11795</div>
<div class="abs" style="left:22.4px;top:305.6px;width:18.4px;height:18.4px"><svg width="100%" height="100%" viewBox="0 0 16 16"><g transform="translate(.3 .6) scale(.94)"><path d="M1 3 Q1 1.8 2.2 1.8 L5.4 1.8 L6.8 3.4 L13.4 3.4 Q14.6 3.4 14.6 4.6 L14.6 12.8 Q14.6 14 13.4 14 L2.2 14 Q1 14 1 12.8Z" fill="#3f9ef0"/><path d="M2 5 L13.6 5 L13.6 12.6 Q13.6 13 13.2 13 L2.4 13 Q2 13 2 12.6Z" fill="#86c9f9"/><path d="M2 9 L13.6 8 L13.6 12.6 Q13.6 13 13.2 13 L2.4 13 Q2 13 2 12.6Z" fill="#5fb3f5"/></g></svg></div>
<div class="abs plus" style="left:4.4px;top:309.47px;width:8.8px;height:8.8px;"><i style="left:1px;top:2.9px;width:4.8px;height:1px"></i><i style="left:2.9px;top:1px;width:1px;height:4.8px"></i></div>
<div class="abs rtxt " style="left:47.73px;top:304px;height:18px;line-height:18px">Download ...</div>
<div class="abs rtxt cnew" style="left:123.2px;top:304px;height:18px;line-height:18px">989</div>
<div class="abs rtxt cunr" style="left:165.6px;top:304px;height:18px;line-height:18px">2141</div>
<div class="abs rtxt " style="left:216.53px;top:304px;height:18px;line-height:18px">15509</div>
<div class="abs" style="left:22.4px;top:323.6px;width:18.4px;height:18.4px"><svg width="100%" height="100%" viewBox="0 0 16 16"><path d="M.6 2.4 Q.6 1.2 1.8 1.2 L4.8 1.2 L6 2.8 L12 2.8 Q13 2.8 13 4 L13 11 L.6 11Z" fill="#3f9ef0"/><path d="M1.6 4.2 L12 4.2 L12 10 L1.6 10Z" fill="#a4d6fa"/><path d="M3.9000000000000004 8.1 L9.4 3.6999999999999993 L14.9 8.1 L14.9 13.875 Q9.4 15.25 3.9000000000000004 13.875Z" fill="#fdc51c" stroke="#f0a400" stroke-width=".6"/><path d="M4.7 13.049999999999999 L9.4 9.475 L14.1 13.049999999999999" fill="none" stroke="#f3a800" stroke-width=".9"/><path d="M4.7 8.649999999999999 L9.4 10.85 L14.1 8.649999999999999" fill="none" stroke="#fde68a" stroke-width=".9"/></svg></div>
<div class="abs rtxt " style="left:47.73px;top:323px;height:18px;line-height:18px">04-10-2002...</div>
<div class="abs rtxt cnew" style="left:123.2px;top:323px;height:18px;line-height:18px">0</div>
<div class="abs rtxt cunr" style="left:165.6px;top:323px;height:18px;line-height:18px">0</div>
<div class="abs rtxt " style="left:216.53px;top:323px;height:18px;line-height:18px">27578</div>
<div class="abs" style="left:22.4px;top:341.6px;width:18.4px;height:18.4px"><svg width="100%" height="100%" viewBox="0 0 16 16"><path d="M.6 2.4 Q.6 1.2 1.8 1.2 L4.8 1.2 L6 2.8 L12 2.8 Q13 2.8 13 4 L13 11 L.6 11Z" fill="#3f9ef0"/><path d="M1.6 4.2 L12 4.2 L12 10 L1.6 10Z" fill="#a4d6fa"/><path d="M3.9000000000000004 8.1 L9.4 3.6999999999999993 L14.9 8.1 L14.9 13.875 Q9.4 15.25 3.9000000000000004 13.875Z" fill="#fdc51c" stroke="#f0a400" stroke-width=".6"/><path d="M4.7 13.049999999999999 L9.4 9.475 L14.1 13.049999999999999" fill="none" stroke="#f3a800" stroke-width=".9"/><path d="M4.7 8.649999999999999 L9.4 10.85 L14.1 8.649999999999999" fill="none" stroke="#fde68a" stroke-width=".9"/></svg></div>
<div class="abs rtxt " style="left:47.73px;top:340px;height:18px;line-height:18px">5-03-2003-...</div>
<div class="abs rtxt cnew" style="left:123.2px;top:340px;height:18px;line-height:18px">0</div>
<div class="abs rtxt cunr" style="left:165.6px;top:340px;height:18px;line-height:18px">0</div>
<div class="abs rtxt " style="left:216.53px;top:340px;height:18px;line-height:18px">74560</div>
<div class="abs" style="left:22.4px;top:359.6px;width:18.4px;height:18.4px"><svg width="100%" height="100%" viewBox="0 0 16 16"><path d="M.6 2.4 Q.6 1.2 1.8 1.2 L4.8 1.2 L6 2.8 L12 2.8 Q13 2.8 13 4 L13 11 L.6 11Z" fill="#3f9ef0"/><path d="M1.6 4.2 L12 4.2 L12 10 L1.6 10Z" fill="#a4d6fa"/><path d="M3.9000000000000004 8.1 L9.4 3.6999999999999993 L14.9 8.1 L14.9 13.875 Q9.4 15.25 3.9000000000000004 13.875Z" fill="#fdc51c" stroke="#f0a400" stroke-width=".6"/><path d="M4.7 13.049999999999999 L9.4 9.475 L14.1 13.049999999999999" fill="none" stroke="#f3a800" stroke-width=".9"/><path d="M4.7 8.649999999999999 L9.4 10.85 L14.1 8.649999999999999" fill="none" stroke="#fde68a" stroke-width=".9"/></svg></div>
<div class="abs rtxt " style="left:47.73px;top:359px;height:18px;line-height:18px">Actuary</div>
<div class="abs rtxt cnew" style="left:123.2px;top:359px;height:18px;line-height:18px">0</div>
<div class="abs rtxt cunr" style="left:165.6px;top:359px;height:18px;line-height:18px">0</div>
<div class="abs rtxt " style="left:216.53px;top:359px;height:18px;line-height:18px">12</div>
<div class="abs" style="left:22.4px;top:377.6px;width:18.4px;height:18.4px"><svg width="100%" height="100%" viewBox="0 0 16 16"><path d="M.6 2.4 Q.6 1.2 1.8 1.2 L4.8 1.2 L6 2.8 L12 2.8 Q13 2.8 13 4 L13 11 L.6 11Z" fill="#3f9ef0"/><path d="M1.6 4.2 L12 4.2 L12 10 L1.6 10Z" fill="#a4d6fa"/><path d="M3.9000000000000004 8.1 L9.4 3.6999999999999993 L14.9 8.1 L14.9 13.875 Q9.4 15.25 3.9000000000000004 13.875Z" fill="#fdc51c" stroke="#f0a400" stroke-width=".6"/><path d="M4.7 13.049999999999999 L9.4 9.475 L14.1 13.049999999999999" fill="none" stroke="#f3a800" stroke-width=".9"/><path d="M4.7 8.649999999999999 L9.4 10.85 L14.1 8.649999999999999" fill="none" stroke="#fde68a" stroke-width=".9"/></svg></div>
<div class="abs rtxt " style="left:47.73px;top:376px;height:18px;line-height:18px">Change Ad...</div>
<div class="abs rtxt cnew" style="left:123.2px;top:376px;height:18px;line-height:18px">0</div>
<div class="abs rtxt cunr" style="left:165.6px;top:376px;height:18px;line-height:18px">0</div>
<div class="abs rtxt " style="left:216.53px;top:376px;height:18px;line-height:18px">77</div>
<div class="abs" style="left:22.4px;top:395.6px;width:18.4px;height:18.4px"><svg width="100%" height="100%" viewBox="0 0 16 16"><path d="M.6 2.4 Q.6 1.2 1.8 1.2 L4.8 1.2 L6 2.8 L12 2.8 Q13 2.8 13 4 L13 11 L.6 11Z" fill="#3f9ef0"/><path d="M1.6 4.2 L12 4.2 L12 10 L1.6 10Z" fill="#a4d6fa"/><path d="M3.9000000000000004 8.1 L9.4 3.6999999999999993 L14.9 8.1 L14.9 13.875 Q9.4 15.25 3.9000000000000004 13.875Z" fill="#fdc51c" stroke="#f0a400" stroke-width=".6"/><path d="M4.7 13.049999999999999 L9.4 9.475 L14.1 13.049999999999999" fill="none" stroke="#f3a800" stroke-width=".9"/><path d="M4.7 8.649999999999999 L9.4 10.85 L14.1 8.649999999999999" fill="none" stroke="#fde68a" stroke-width=".9"/></svg></div>
<div class="abs rtxt " style="left:47.73px;top:395px;height:18px;line-height:18px">Download -...</div>
<div class="abs rtxt cnew" style="left:123.2px;top:395px;height:18px;line-height:18px">0</div>
<div class="abs rtxt cunr" style="left:165.6px;top:395px;height:18px;line-height:18px">0</div>
<div class="abs rtxt " style="left:216.53px;top:395px;height:18px;line-height:18px">54678</div>
<div class="abs" style="left:22.4px;top:413.6px;width:18.4px;height:18.4px"><svg width="100%" height="100%" viewBox="0 0 16 16"><path d="M.6 2.4 Q.6 1.2 1.8 1.2 L4.8 1.2 L6 2.8 L12 2.8 Q13 2.8 13 4 L13 11 L.6 11Z" fill="#3f9ef0"/><path d="M1.6 4.2 L12 4.2 L12 10 L1.6 10Z" fill="#a4d6fa"/><path d="M3.9000000000000004 8.1 L9.4 3.6999999999999993 L14.9 8.1 L14.9 13.875 Q9.4 15.25 3.9000000000000004 13.875Z" fill="#fdc51c" stroke="#f0a400" stroke-width=".6"/><path d="M4.7 13.049999999999999 L9.4 9.475 L14.1 13.049999999999999" fill="none" stroke="#f3a800" stroke-width=".9"/><path d="M4.7 8.649999999999999 L9.4 10.85 L14.1 8.649999999999999" fill="none" stroke="#fde68a" stroke-width=".9"/></svg></div>
<div class="abs rtxt " style="left:47.73px;top:412px;height:18px;line-height:18px">Download ...</div>
<div class="abs rtxt cnew" style="left:123.2px;top:412px;height:18px;line-height:18px">0</div>
<div class="abs rtxt cunr" style="left:165.6px;top:412px;height:18px;line-height:18px">0</div>
<div class="abs rtxt " style="left:216.53px;top:412px;height:18px;line-height:18px">46982</div>
<div class="abs" style="left:22.4px;top:431.6px;width:18.4px;height:18.4px"><svg width="100%" height="100%" viewBox="0 0 16 16"><path d="M.6 2.4 Q.6 1.2 1.8 1.2 L4.8 1.2 L6 2.8 L12 2.8 Q13 2.8 13 4 L13 11 L.6 11Z" fill="#3f9ef0"/><path d="M1.6 4.2 L12 4.2 L12 10 L1.6 10Z" fill="#a4d6fa"/><path d="M3.9000000000000004 8.1 L9.4 3.6999999999999993 L14.9 8.1 L14.9 13.875 Q9.4 15.25 3.9000000000000004 13.875Z" fill="#fdc51c" stroke="#f0a400" stroke-width=".6"/><path d="M4.7 13.049999999999999 L9.4 9.475 L14.1 13.049999999999999" fill="none" stroke="#f3a800" stroke-width=".9"/><path d="M4.7 8.649999999999999 L9.4 10.85 L14.1 8.649999999999999" fill="none" stroke="#fde68a" stroke-width=".9"/></svg></div>
<div class="abs rtxt " style="left:47.73px;top:431px;height:18px;line-height:18px">ipension-do...</div>
<div class="abs rtxt cnew" style="left:123.2px;top:431px;height:18px;line-height:18px">0</div>
<div class="abs rtxt cunr" style="left:165.6px;top:431px;height:18px;line-height:18px">111</div>
<div class="abs rtxt " style="left:216.53px;top:431px;height:18px;line-height:18px">1292</div>
<div class="abs" style="left:22.4px;top:449.6px;width:18.4px;height:18.4px"><svg width="100%" height="100%" viewBox="0 0 16 16"><path d="M.6 2.4 Q.6 1.2 1.8 1.2 L4.8 1.2 L6 2.8 L12 2.8 Q13 2.8 13 4 L13 11 L.6 11Z" fill="#3f9ef0"/><path d="M1.6 4.2 L12 4.2 L12 10 L1.6 10Z" fill="#a4d6fa"/><path d="M3.9000000000000004 8.1 L9.4 3.6999999999999993 L14.9 8.1 L14.9 13.875 Q9.4 15.25 3.9000000000000004 13.875Z" fill="#fdc51c" stroke="#f0a400" stroke-width=".6"/><path d="M4.7 13.049999999999999 L9.4 9.475 L14.1 13.049999999999999" fill="none" stroke="#f3a800" stroke-width=".9"/><path d="M4.7 8.649999999999999 L9.4 10.85 L14.1 8.649999999999999" fill="none" stroke="#fde68a" stroke-width=".9"/></svg></div>
<div class="abs rtxt " style="left:47.73px;top:448px;height:18px;line-height:18px">isoftware</div>
<div class="abs rtxt cnew" style="left:123.2px;top:448px;height:18px;line-height:18px">0</div>
<div class="abs rtxt cunr" style="left:165.6px;top:448px;height:18px;line-height:18px">0</div>
<div class="abs rtxt " style="left:216.53px;top:448px;height:18px;line-height:18px">101</div>
<div class="abs" style="left:22.4px;top:467.6px;width:18.4px;height:18.4px"><svg width="100%" height="100%" viewBox="0 0 16 16"><path d="M.6 2.4 Q.6 1.2 1.8 1.2 L4.8 1.2 L6 2.8 L12 2.8 Q13 2.8 13 4 L13 11 L.6 11Z" fill="#3f9ef0"/><path d="M1.6 4.2 L12 4.2 L12 10 L1.6 10Z" fill="#a4d6fa"/><path d="M3.9000000000000004 8.1 L9.4 3.6999999999999993 L14.9 8.1 L14.9 13.875 Q9.4 15.25 3.9000000000000004 13.875Z" fill="#fdc51c" stroke="#f0a400" stroke-width=".6"/><path d="M4.7 13.049999999999999 L9.4 9.475 L14.1 13.049999999999999" fill="none" stroke="#f3a800" stroke-width=".9"/><path d="M4.7 8.649999999999999 L9.4 10.85 L14.1 8.649999999999999" fill="none" stroke="#fde68a" stroke-width=".9"/></svg></div>
<div class="abs rtxt " style="left:47.73px;top:467px;height:18px;line-height:18px">mail-comm...</div>
<div class="abs rtxt cnew" style="left:123.2px;top:467px;height:18px;line-height:18px">0</div>
<div class="abs rtxt cunr" style="left:165.6px;top:467px;height:18px;line-height:18px">0</div>
<div class="abs rtxt " style="left:216.53px;top:467px;height:18px;line-height:18px">914</div>
<div class="abs" style="left:22.4px;top:485.6px;width:18.4px;height:18.4px"><svg width="100%" height="100%" viewBox="0 0 16 16"><path d="M.6 2.4 Q.6 1.2 1.8 1.2 L4.8 1.2 L6 2.8 L12 2.8 Q13 2.8 13 4 L13 11 L.6 11Z" fill="#3f9ef0"/><path d="M1.6 4.2 L12 4.2 L12 10 L1.6 10Z" fill="#a4d6fa"/><path d="M3.9000000000000004 8.1 L9.4 3.6999999999999993 L14.9 8.1 L14.9 13.875 Q9.4 15.25 3.9000000000000004 13.875Z" fill="#fdc51c" stroke="#f0a400" stroke-width=".6"/><path d="M4.7 13.049999999999999 L9.4 9.475 L14.1 13.049999999999999" fill="none" stroke="#f3a800" stroke-width=".9"/><path d="M4.7 8.649999999999999 L9.4 10.85 L14.1 8.649999999999999" fill="none" stroke="#fde68a" stroke-width=".9"/></svg></div>
<div class="abs rtxt " style="left:47.73px;top:484px;height:18px;line-height:18px">NetMail</div>
<div class="abs rtxt cnew" style="left:123.2px;top:484px;height:18px;line-height:18px">0</div>
<div class="abs rtxt cunr" style="left:165.6px;top:484px;height:18px;line-height:18px">0</div>
<div class="abs rtxt " style="left:216.53px;top:484px;height:18px;line-height:18px">2133</div>
<div class="abs" style="left:22.4px;top:503.6px;width:18.4px;height:18.4px"><svg width="100%" height="100%" viewBox="0 0 16 16"><path d="M.6 2.4 Q.6 1.2 1.8 1.2 L4.8 1.2 L6 2.8 L12 2.8 Q13 2.8 13 4 L13 11 L.6 11Z" fill="#3f9ef0"/><path d="M1.6 4.2 L12 4.2 L12 10 L1.6 10Z" fill="#a4d6fa"/><path d="M3.9000000000000004 8.1 L9.4 3.6999999999999993 L14.9 8.1 L14.9 13.875 Q9.4 15.25 3.9000000000000004 13.875Z" fill="#fdc51c" stroke="#f0a400" stroke-width=".6"/><path d="M4.7 13.049999999999999 L9.4 9.475 L14.1 13.049999999999999" fill="none" stroke="#f3a800" stroke-width=".9"/><path d="M4.7 8.649999999999999 L9.4 10.85 L14.1 8.649999999999999" fill="none" stroke="#fde68a" stroke-width=".9"/></svg></div>
<div class="abs rtxt " style="left:47.73px;top:503px;height:18px;line-height:18px">NetMail - m...</div>
<div class="abs rtxt cnew" style="left:123.2px;top:503px;height:18px;line-height:18px">0</div>
<div class="abs rtxt cunr" style="left:165.6px;top:503px;height:18px;line-height:18px">0</div>
<div class="abs rtxt " style="left:216.53px;top:503px;height:18px;line-height:18px">83</div>
<div class="abs" style="left:0px;top:522.13px;width:255.47px;height:17.73px;background:#3180c4"></div>
<div class="abs" style="left:114.4px;top:522.13px;width:1.07px;height:17.73px;background:#8fc0ea"></div>
<div class="abs" style="left:155.47px;top:522.13px;width:1.07px;height:17.73px;background:#8fc0ea"></div>
<div class="abs" style="left:206.67px;top:522.13px;width:1.07px;height:17.73px;background:#8fc0ea"></div>
<div class="abs" style="left:22.4px;top:521.6px;width:18.4px;height:18.4px"><svg width="100%" height="100%" viewBox="0 0 16 16"><path d="M.6 2.4 Q.6 1.2 1.8 1.2 L4.8 1.2 L6 2.8 L12 2.8 Q13 2.8 13 4 L13 11 L.6 11Z" fill="#3f9ef0"/><path d="M1.6 4.2 L12 4.2 L12 10 L1.6 10Z" fill="#a4d6fa"/><path d="M3.9000000000000004 8.1 L9.4 3.6999999999999993 L14.9 8.1 L14.9 13.875 Q9.4 15.25 3.9000000000000004 13.875Z" fill="#fdc51c" stroke="#f0a400" stroke-width=".6"/><path d="M4.7 13.049999999999999 L9.4 9.475 L14.1 13.049999999999999" fill="none" stroke="#f3a800" stroke-width=".9"/><path d="M4.7 8.649999999999999 L9.4 10.85 L14.1 8.649999999999999" fill="none" stroke="#fde68a" stroke-width=".9"/></svg></div>
<div class="abs rtxt " style="color:#fff;left:47.73px;top:520px;height:18px;line-height:18px">NEWS SE...</div>
<div class="abs rtxt cnew" style="color:#fff;left:123.2px;top:520px;height:18px;line-height:18px">0</div>
<div class="abs rtxt cunr" style="color:#fff;left:165.6px;top:520px;height:18px;line-height:18px">42</div>
<div class="abs rtxt " style="color:#fff;left:216.53px;top:520px;height:18px;line-height:18px">2912</div>
<div class="abs" style="left:22.4px;top:539.6px;width:18.4px;height:18.4px"><svg width="100%" height="100%" viewBox="0 0 16 16"><path d="M.6 2.4 Q.6 1.2 1.8 1.2 L4.8 1.2 L6 2.8 L12 2.8 Q13 2.8 13 4 L13 11 L.6 11Z" fill="#3f9ef0"/><path d="M1.6 4.2 L12 4.2 L12 10 L1.6 10Z" fill="#a4d6fa"/><path d="M3.9000000000000004 8.1 L9.4 3.6999999999999993 L14.9 8.1 L14.9 13.875 Q9.4 15.25 3.9000000000000004 13.875Z" fill="#fdc51c" stroke="#f0a400" stroke-width=".6"/><path d="M4.7 13.049999999999999 L9.4 9.475 L14.1 13.049999999999999" fill="none" stroke="#f3a800" stroke-width=".9"/><path d="M4.7 8.649999999999999 L9.4 10.85 L14.1 8.649999999999999" fill="none" stroke="#fde68a" stroke-width=".9"/></svg></div>
<div class="abs rtxt " style="left:47.73px;top:539px;height:18px;line-height:18px">Subcribe-N...</div>
<div class="abs rtxt cnew" style="left:123.2px;top:539px;height:18px;line-height:18px">0</div>
<div class="abs rtxt cunr" style="left:165.6px;top:539px;height:18px;line-height:18px">0</div>
<div class="abs rtxt " style="left:216.53px;top:539px;height:18px;line-height:18px">490</div>
<div class="abs" style="left:22.4px;top:557.6px;width:18.4px;height:18.4px"><svg width="100%" height="100%" viewBox="0 0 16 16"><path d="M.6 2.4 Q.6 1.2 1.8 1.2 L4.8 1.2 L6 2.8 L12 2.8 Q13 2.8 13 4 L13 11 L.6 11Z" fill="#3f9ef0"/><path d="M1.6 4.2 L12 4.2 L12 10 L1.6 10Z" fill="#a4d6fa"/><path d="M3.9000000000000004 8.1 L9.4 3.6999999999999993 L14.9 8.1 L14.9 13.875 Q9.4 15.25 3.9000000000000004 13.875Z" fill="#fdc51c" stroke="#f0a400" stroke-width=".6"/><path d="M4.7 13.049999999999999 L9.4 9.475 L14.1 13.049999999999999" fill="none" stroke="#f3a800" stroke-width=".9"/><path d="M4.7 8.649999999999999 L9.4 10.85 L14.1 8.649999999999999" fill="none" stroke="#fde68a" stroke-width=".9"/></svg></div>
<div class="abs rtxt " style="left:47.73px;top:556px;height:18px;line-height:18px">Subscribe</div>
<div class="abs rtxt cnew" style="left:123.2px;top:556px;height:18px;line-height:18px">0</div>
<div class="abs rtxt cunr" style="left:165.6px;top:556px;height:18px;line-height:18px">0</div>
<div class="abs rtxt " style="left:216.53px;top:556px;height:18px;line-height:18px">74</div>
<div class="abs" style="left:4.4px;top:575.6px;width:18.4px;height:18.4px"><svg width="100%" height="100%" viewBox="0 0 16 16"><g transform="translate(.3 .6) scale(.94)"><path d="M1 3 Q1 1.8 2.2 1.8 L5.4 1.8 L6.8 3.4 L13.4 3.4 Q14.6 3.4 14.6 4.6 L14.6 12.8 Q14.6 14 13.4 14 L2.2 14 Q1 14 1 12.8Z" fill="#3f9ef0"/><path d="M2 5 L13.6 5 L13.6 12.6 Q13.6 13 13.2 13 L2.4 13 Q2 13 2 12.6Z" fill="#86c9f9"/><path d="M2 9 L13.6 8 L13.6 12.6 Q13.6 13 13.2 13 L2.4 13 Q2 13 2 12.6Z" fill="#5fb3f5"/></g></svg></div>
<div class="abs rtxt " style="left:29.33px;top:575px;height:18px;line-height:18px">5-NEWS-OLD</div>
<div class="abs rtxt " style="left:216.53px;top:575px;height:18px;line-height:18px">1445...</div>
<div class="abs" style="left:4.4px;top:593.6px;width:18.4px;height:18.4px"><svg width="100%" height="100%" viewBox="0 0 16 16"><g transform="translate(.3 .6) scale(.94)"><path d="M1 3 Q1 1.8 2.2 1.8 L5.4 1.8 L6.8 3.4 L13.4 3.4 Q14.6 3.4 14.6 4.6 L14.6 12.8 Q14.6 14 13.4 14 L2.2 14 Q1 14 1 12.8Z" fill="#3f9ef0"/><path d="M2 5 L13.6 5 L13.6 12.6 Q13.6 13 13.2 13 L2.4 13 Q2 13 2 12.6Z" fill="#86c9f9"/><path d="M2 9 L13.6 8 L13.6 12.6 Q13.6 13 13.2 13 L2.4 13 Q2 13 2 12.6Z" fill="#5fb3f5"/></g></svg></div>
<div class="abs rtxt " style="left:29.33px;top:592px;height:18px;line-height:18px">6-CD-ROM-CA...</div>
<div class="abs rtxt " style="left:216.53px;top:592px;height:18px;line-height:18px">397</div>
<div class="abs" style="left:4.4px;top:611.6px;width:18.4px;height:18.4px"><svg width="100%" height="100%" viewBox="0 0 16 16"><g transform="translate(.3 .6) scale(.94)"><path d="M1 3 Q1 1.8 2.2 1.8 L5.4 1.8 L6.8 3.4 L13.4 3.4 Q14.6 3.4 14.6 4.6 L14.6 12.8 Q14.6 14 13.4 14 L2.2 14 Q1 14 1 12.8Z" fill="#3f9ef0"/><path d="M2 5 L13.6 5 L13.6 12.6 Q13.6 13 13.2 13 L2.4 13 Q2 13 2 12.6Z" fill="#86c9f9"/><path d="M2 9 L13.6 8 L13.6 12.6 Q13.6 13 13.2 13 L2.4 13 Q2 13 2 12.6Z" fill="#5fb3f5"/></g></svg></div>
<div class="abs rtxt " style="left:29.33px;top:611px;height:18px;line-height:18px">6-FINDEXE</div>
<div class="abs rtxt " style="left:216.53px;top:611px;height:18px;line-height:18px">6198</div>
<div class="abs" style="left:4.4px;top:629.6px;width:18.4px;height:18.4px"><svg width="100%" height="100%" viewBox="0 0 16 16"><g transform="translate(.3 .6) scale(.94)"><path d="M1 3 Q1 1.8 2.2 1.8 L5.4 1.8 L6.8 3.4 L13.4 3.4 Q14.6 3.4 14.6 4.6 L14.6 12.8 Q14.6 14 13.4 14 L2.2 14 Q1 14 1 12.8Z" fill="#3f9ef0"/><path d="M2 5 L13.6 5 L13.6 12.6 Q13.6 13 13.2 13 L2.4 13 Q2 13 2 12.6Z" fill="#86c9f9"/><path d="M2 9 L13.6 8 L13.6 12.6 Q13.6 13 13.2 13 L2.4 13 Q2 13 2 12.6Z" fill="#5fb3f5"/></g></svg></div>
<div class="abs rtxt " style="left:29.33px;top:628px;height:18px;line-height:18px">7-DEMO</div>
<div class="abs rtxt " style="left:216.53px;top:628px;height:18px;line-height:18px">536</div>
<div class="abs" style="left:4.4px;top:647.6px;width:18.4px;height:18.4px"><svg width="100%" height="100%" viewBox="0 0 16 16"><g transform="translate(.3 .6) scale(.94)"><path d="M1 3 Q1 1.8 2.2 1.8 L5.4 1.8 L6.8 3.4 L13.4 3.4 Q14.6 3.4 14.6 4.6 L14.6 12.8 Q14.6 14 13.4 14 L2.2 14 Q1 14 1 12.8Z" fill="#3f9ef0"/><path d="M2 5 L13.6 5 L13.6 12.6 Q13.6 13 13.2 13 L2.4 13 Q2 13 2 12.6Z" fill="#86c9f9"/><path d="M2 9 L13.6 8 L13.6 12.6 Q13.6 13 13.2 13 L2.4 13 Q2 13 2 12.6Z" fill="#5fb3f5"/></g></svg></div>
<div class="abs rtxt " style="left:29.33px;top:647px;height:18px;line-height:18px">8-SUBMIT</div>
<div class="abs rtxt cnew" style="left:123.2px;top:647px;height:18px;line-height:18px">83</div>
<div class="abs rtxt cunr" style="left:165.6px;top:647px;height:18px;line-height:18px">259</div>
<div class="abs rtxt " style="left:216.53px;top:647px;height:18px;line-height:18px">9747</div>
<div class="abs" style="left:4.4px;top:665.6px;width:18.4px;height:18.4px"><svg width="100%" height="100%" viewBox="0 0 16 16"><g transform="translate(.3 .6) scale(.94)"><path d="M1 3 Q1 1.8 2.2 1.8 L5.4 1.8 L6.8 3.4 L13.4 3.4 Q14.6 3.4 14.6 4.6 L14.6 12.8 Q14.6 14 13.4 14 L2.2 14 Q1 14 1 12.8Z" fill="#3f9ef0"/><path d="M2 5 L13.6 5 L13.6 12.6 Q13.6 13 13.2 13 L2.4 13 Q2 13 2 12.6Z" fill="#86c9f9"/><path d="M2 9 L13.6 8 L13.6 12.6 Q13.6 13 13.2 13 L2.4 13 Q2 13 2 12.6Z" fill="#5fb3f5"/></g></svg></div>
<div class="abs rtxt " style="left:29.33px;top:664px;height:18px;line-height:18px">9-HOSTING</div>
<div class="abs rtxt cnew" style="left:123.2px;top:664px;height:18px;line-height:18px">157</div>
<div class="abs rtxt cunr" style="left:165.6px;top:664px;height:18px;line-height:18px">326</div>
<div class="abs rtxt " style="left:216.53px;top:664px;height:18px;line-height:18px">4969</div>
<div class="abs sbtrack" style="left:255.47px;top:106.4px;width:16.53px;height:575.6px;"></div>
<div class="abs sbbtn" style="left:256px;top:106.93px;width:16px;height:15.6px;"><b class="up"></b></div>
<div class="abs sbbtn" style="left:256px;top:122.67px;width:16px;height:376.8px;"></div>
<div class="abs sbbtn" style="left:256px;top:665.87px;width:16px;height:15.87px;"><b class="dn"></b></div>
<div class="abs dispbar" style="left:0px;top:681.73px;width:272px;height:25.33px;"></div>
<div class="abs dtxt" style="color:#1c3c8c;left:7.47px;top:684px;height:18px;line-height:18px">Display</div>
<div class="abs radio" style="left:57.73px;top:688px;width:10.93px;height:10.93px;"></div>
<div class="abs dtxt" style="color:#ff2d9b;left:74.67px;top:685px;height:18px;line-height:18px">New</div>
<div class="abs radio" style="left:122.13px;top:688px;width:10.93px;height:10.93px;"></div>
<div class="abs dtxt" style="color:#8d95f0;left:139.73px;top:685px;height:18px;line-height:18px">Unread</div>
<div class="abs radio" style="left:187.47px;top:688px;width:10.93px;height:10.93px;"><i></i></div>
<div class="abs dtxt" style="color:#000;left:204px;top:685px;height:18px;line-height:18px">All</div>
<div class="abs vsplit" style="left:272px;top:89.73px;width:4.8px;height:617.2px;"></div>
<div class="abs" style="left:276.8px;top:89.73px;width:741.87px;height:287.6px;background:#fff"></div>
<div class="abs lhead" style="left:276.8px;top:89.73px;width:741.87px;height:16.4px;"></div>
<div class="abs htxt" style="left:283.6px;top:89px;height:18px;line-height:18px">S A</div>
<div class="abs htxt" style="left:346.4px;top:89px;height:18px;line-height:18px">Size</div>
<div class="abs htxt" style="left:399.2px;top:89px;height:18px;line-height:18px">Who</div>
<div class="abs htxt" style="left:538.8px;top:89px;height:18px;line-height:18px">When</div>
<div class="abs htxt" style="left:626.67px;top:89px;height:18px;line-height:18px">Time</div>
<div class="abs htxt" style="left:696.13px;top:89px;height:18px;line-height:18px">Subject</div>
<div class="abs" style="left:338.13px;top:92px;width:1.07px;height:12px;background:#b9b6a6"></div>
<div class="abs" style="left:339.2px;top:92px;width:0.93px;height:12px;background:#fff"></div>
<div class="abs vdot" style="left:338.13px;top:106.4px;width:1.07px;height:270.93px;"></div>
<div class="abs" style="left:391.47px;top:92px;width:1.07px;height:12px;background:#b9b6a6"></div>
<div class="abs" style="left:392.53px;top:92px;width:0.93px;height:12px;background:#fff"></div>
<div class="abs vdot" style="left:391.47px;top:106.4px;width:1.07px;height:270.93px;"></div>
<div class="abs" style="left:531.2px;top:92px;width:1.07px;height:12px;background:#b9b6a6"></div>
<div class="abs" style="left:532.27px;top:92px;width:0.93px;height:12px;background:#fff"></div>
<div class="abs vdot" style="left:531.2px;top:106.4px;width:1.07px;height:270.93px;"></div>
<div class="abs" style="left:618.4px;top:92px;width:1.07px;height:12px;background:#b9b6a6"></div>
<div class="abs" style="left:619.47px;top:92px;width:0.93px;height:12px;background:#fff"></div>
<div class="abs vdot" style="left:618.4px;top:106.4px;width:1.07px;height:270.93px;"></div>
<div class="abs" style="left:688.53px;top:92px;width:1.07px;height:12px;background:#b9b6a6"></div>
<div class="abs" style="left:689.6px;top:92px;width:0.93px;height:12px;background:#fff"></div>
<div class="abs vdot" style="left:688.53px;top:106.4px;width:1.07px;height:270.93px;"></div>
<div class="abs" style="left:1002.93px;top:92px;width:1.07px;height:12px;background:#b9b6a6"></div>
<div class="abs" style="left:1004px;top:92px;width:0.93px;height:12px;background:#fff"></div>
<div class="abs vdot" style="left:1002.93px;top:106.4px;width:1.07px;height:270.93px;"></div>
<div class="abs hdot" style="left:276.8px;top:124px;width:726.67px;height:1.07px;"></div>
<div class="abs rtxt clip" style="left:358.93px;width:36.27px;top:107px;height:18px;line-height:18px">941</div>
<div class="abs rtxt clip" style="left:413.33px;width:134.4px;top:107px;height:18px;line-height:18px">"LAXMAN" &lt;laxprddxb@gmail.com&gt;</div>
<div class="abs rtxt clip" style="left:552.27px;width:74.36px;top:107px;height:18px;line-height:18px">14.01.2004</div>
<div class="abs rtxt clip" style="left:639.33px;width:55.62px;top:107px;height:18px;line-height:18px">22:35:33</div>
<div class="abs rtxt clip" style="left:709.33px;width:335.24px;top:107px;height:18px;line-height:18px">InternetRelatedNewsService - All</div>
<div class="abs hdot" style="left:276.8px;top:142px;width:726.67px;height:1.07px;"></div>
<div class="abs rtxt clip" style="left:358.93px;width:36.27px;top:124px;height:18px;line-height:18px">1014</div>
<div class="abs rtxt clip" style="left:413.33px;width:134.4px;top:124px;height:18px;line-height:18px">"Shamim" &lt;engrshamim@yahoo.com&gt;</div>
<div class="abs rtxt clip" style="left:552.27px;width:74.36px;top:124px;height:18px;line-height:18px">15.01.2004</div>
<div class="abs rtxt clip" style="left:639.33px;width:55.62px;top:124px;height:18px;line-height:18px">12:50:48</div>
<div class="abs rtxt clip" style="left:709.33px;width:335.24px;top:124px;height:18px;line-height:18px">InternetRelatedNewsService - Word / Excel Report Builder</div>
<div class="abs hdot" style="left:276.8px;top:160px;width:726.67px;height:1.07px;"></div>
<div class="abs rtxt clip" style="left:358.93px;width:36.27px;top:143px;height:18px;line-height:18px">893</div>
<div class="abs rtxt clip" style="left:413.33px;width:134.4px;top:143px;height:18px;line-height:18px">"rand" &lt;randyburtis@yahoo.com&gt;</div>
<div class="abs rtxt clip" style="left:552.27px;width:74.36px;top:143px;height:18px;line-height:18px">15.01.2004</div>
<div class="abs rtxt clip" style="left:639.33px;width:55.62px;top:143px;height:18px;line-height:18px">17:34:59</div>
<div class="abs rtxt clip" style="left:709.33px;width:335.24px;top:143px;height:18px;line-height:18px">InternetRelatedNewsService - FTP Navigator</div>
<div class="abs hdot" style="left:276.8px;top:178px;width:726.67px;height:1.07px;"></div>
<div class="abs rtxt clip" style="left:358.93px;width:36.27px;top:160px;height:18px;line-height:18px">880</div>
<div class="abs rtxt clip" style="left:413.33px;width:134.4px;top:160px;height:18px;line-height:18px">"l" &lt;ll@hotmail.com&gt;</div>
<div class="abs rtxt clip" style="left:552.27px;width:74.36px;top:160px;height:18px;line-height:18px">16.01.2004</div>
<div class="abs rtxt clip" style="left:639.33px;width:55.62px;top:160px;height:18px;line-height:18px">19:54:17</div>
<div class="abs rtxt clip" style="left:709.33px;width:335.24px;top:160px;height:18px;line-height:18px">InternetRelatedNewsService -</div>
<div class="abs hdot" style="left:276.8px;top:196px;width:726.67px;height:1.07px;"></div>
<div class="abs rtxt clip" style="left:358.93px;width:36.27px;top:179px;height:18px;line-height:18px">935</div>
<div class="abs rtxt clip" style="left:413.33px;width:134.4px;top:179px;height:18px;line-height:18px">"Bill" &lt;billsey@dsl-only.net&gt;</div>
<div class="abs rtxt clip" style="left:552.27px;width:74.36px;top:179px;height:18px;line-height:18px">16.01.2004</div>
<div class="abs rtxt clip" style="left:639.33px;width:55.62px;top:179px;height:18px;line-height:18px">23:30:07</div>
<div class="abs rtxt clip" style="left:709.33px;width:335.24px;top:179px;height:18px;line-height:18px">InternetRelatedNewsService - Website eXtractor</div>
<div class="abs hdot" style="left:276.8px;top:214px;width:726.67px;height:1.07px;"></div>
<div class="abs rtxt clip" style="left:358.93px;width:36.27px;top:196px;height:18px;line-height:18px">899</div>
<div class="abs rtxt clip" style="left:413.33px;width:134.4px;top:196px;height:18px;line-height:18px">"raymundo" &lt;raymundodo@aol.com&gt;</div>
<div class="abs rtxt clip" style="left:552.27px;width:74.36px;top:196px;height:18px;line-height:18px">18.01.2004</div>
<div class="abs rtxt clip" style="left:639.33px;width:55.62px;top:196px;height:18px;line-height:18px">01:41:53</div>
<div class="abs rtxt clip" style="left:709.33px;width:335.24px;top:196px;height:18px;line-height:18px">InternetRelatedNewsService - All</div>
<div class="abs" style="left:276.8px;top:215.87px;width:726.93px;height:17.87px;background:#3180c4"></div>
<div class="abs" style="left:338.13px;top:216.13px;width:1.07px;height:17.73px;background:#8fc0ea"></div>
<div class="abs" style="left:391.47px;top:216.13px;width:1.07px;height:17.73px;background:#8fc0ea"></div>
<div class="abs" style="left:531.2px;top:216.13px;width:1.07px;height:17.73px;background:#8fc0ea"></div>
<div class="abs" style="left:618.4px;top:216.13px;width:1.07px;height:17.73px;background:#8fc0ea"></div>
<div class="abs" style="left:688.53px;top:216.13px;width:1.07px;height:17.73px;background:#8fc0ea"></div>
<div class="abs rtxt clip" style="color:#fff;left:358.93px;width:36.27px;top:215px;height:18px;line-height:18px">921</div>
<div class="abs rtxt clip" style="color:#fff;left:413.33px;width:134.4px;top:215px;height:18px;line-height:18px">"halim" &lt;mohd_abd_halim@hotmail.com&gt;</div>
<div class="abs rtxt clip" style="color:#fff;left:552.27px;width:74.36px;top:215px;height:18px;line-height:18px">18.01.2004</div>
<div class="abs rtxt clip" style="color:#fff;left:639.33px;width:55.62px;top:215px;height:18px;line-height:18px">09:09:36</div>
<div class="abs rtxt clip" style="color:#fff;left:709.33px;width:335.24px;top:215px;height:18px;line-height:18px">InternetRelatedNewsService - DB Maker</div>
<div class="abs hdot" style="left:276.8px;top:250px;width:726.67px;height:1.07px;"></div>
<div class="abs rtxt clip" style="left:358.93px;width:36.27px;top:232px;height:18px;line-height:18px">900</div>
<div class="abs rtxt clip" style="left:413.33px;width:134.4px;top:232px;height:18px;line-height:18px">"Luzik" &lt;dyjak@o2.pl&gt;</div>
<div class="abs rtxt clip" style="left:552.27px;width:74.36px;top:232px;height:18px;line-height:18px">18.01.2004</div>
<div class="abs rtxt clip" style="left:639.33px;width:55.62px;top:232px;height:18px;line-height:18px">10:21:05</div>
<div class="abs rtxt clip" style="left:709.33px;width:335.24px;top:232px;height:18px;line-height:18px">InternetRelatedNewsService - FTP Commander</div>
<div class="abs hdot" style="left:276.8px;top:268px;width:726.67px;height:1.07px;"></div>
<div class="abs rtxt clip" style="left:358.93px;width:36.27px;top:251px;height:18px;line-height:18px">918</div>
<div class="abs rtxt clip" style="left:413.33px;width:134.4px;top:251px;height:18px;line-height:18px">".." &lt;jules@tugamail.com&gt;</div>
<div class="abs rtxt clip" style="left:552.27px;width:74.36px;top:251px;height:18px;line-height:18px">18.01.2004</div>
<div class="abs rtxt clip" style="left:639.33px;width:55.62px;top:251px;height:18px;line-height:18px">14:02:44</div>
<div class="abs rtxt clip" style="left:709.33px;width:335.24px;top:251px;height:18px;line-height:18px">InternetRelatedNewsService - FTP Navigator</div>
<div class="abs hdot" style="left:276.8px;top:286px;width:726.67px;height:1.07px;"></div>
<div class="abs rtxt clip" style="left:358.93px;width:36.27px;top:268px;height:18px;line-height:18px">900</div>
<div class="abs rtxt clip" style="left:413.33px;width:134.4px;top:268px;height:18px;line-height:18px">"def" &lt;jkl@mno.com&gt;</div>
<div class="abs rtxt clip" style="left:552.27px;width:74.36px;top:268px;height:18px;line-height:18px">19.01.2004</div>
<div class="abs rtxt clip" style="left:639.33px;width:55.62px;top:268px;height:18px;line-height:18px">02:15:12</div>
<div class="abs rtxt clip" style="left:709.33px;width:335.24px;top:268px;height:18px;line-height:18px">InternetRelatedNewsService - Word / Excel Report Builder</div>
<div class="abs hdot" style="left:276.8px;top:304px;width:726.67px;height:1.07px;"></div>
<div class="abs rtxt clip" style="left:358.93px;width:36.27px;top:287px;height:18px;line-height:18px">1000</div>
<div class="abs rtxt clip" style="left:413.33px;width:134.4px;top:287px;height:18px;line-height:18px">"julio" &lt;julioarbulo@yahoo.com&gt;</div>
<div class="abs rtxt clip" style="left:552.27px;width:74.36px;top:287px;height:18px;line-height:18px">19.01.2004</div>
<div class="abs rtxt clip" style="left:639.33px;width:55.62px;top:287px;height:18px;line-height:18px">05:44:21</div>
<div class="abs rtxt clip" style="left:709.33px;width:335.24px;top:287px;height:18px;line-height:18px">InternetRelatedNewsService -</div>
<div class="abs hdot" style="left:276.8px;top:322px;width:726.67px;height:1.07px;"></div>
<div class="abs rtxt clip" style="left:358.93px;width:36.27px;top:304px;height:18px;line-height:18px">905</div>
<div class="abs rtxt clip" style="left:413.33px;width:134.4px;top:304px;height:18px;line-height:18px">"il" &lt;igor@yahoo.com&gt;</div>
<div class="abs rtxt clip" style="left:552.27px;width:74.36px;top:304px;height:18px;line-height:18px">19.01.2004</div>
<div class="abs rtxt clip" style="left:639.33px;width:55.62px;top:304px;height:18px;line-height:18px">08:30:52</div>
<div class="abs rtxt clip" style="left:709.33px;width:335.24px;top:304px;height:18px;line-height:18px">InternetRelatedNewsService - FTP Navigator</div>
<div class="abs hdot" style="left:276.8px;top:340px;width:726.67px;height:1.07px;"></div>
<div class="abs rtxt clip" style="left:358.93px;width:36.27px;top:323px;height:18px;line-height:18px">893</div>
<div class="abs rtxt clip" style="left:413.33px;width:134.4px;top:323px;height:18px;line-height:18px">"d" &lt;dwd@hotmail.com&gt;</div>
<div class="abs rtxt clip" style="left:552.27px;width:74.36px;top:323px;height:18px;line-height:18px">19.01.2004</div>
<div class="abs rtxt clip" style="left:639.33px;width:55.62px;top:323px;height:18px;line-height:18px">11:17:40</div>
<div class="abs rtxt clip" style="left:709.33px;width:335.24px;top:323px;height:18px;line-height:18px">InternetRelatedNewsService - Netmail</div>
<div class="abs hdot" style="left:276.8px;top:358px;width:726.67px;height:1.07px;"></div>
<div class="abs rtxt clip" style="left:358.93px;width:36.27px;top:340px;height:18px;line-height:18px">892</div>
<div class="abs rtxt clip" style="left:413.33px;width:134.4px;top:340px;height:18px;line-height:18px">"Nelson" &lt;nelson@hotmail.com&gt;</div>
<div class="abs rtxt clip" style="left:552.27px;width:74.36px;top:340px;height:18px;line-height:18px">19.01.2004</div>
<div class="abs rtxt clip" style="left:639.33px;width:55.62px;top:340px;height:18px;line-height:18px">13:26:09</div>
<div class="abs rtxt clip" style="left:709.33px;width:335.24px;top:340px;height:18px;line-height:18px">InternetRelatedNewsService -</div>
<div class="abs hdot" style="left:276.8px;top:376px;width:726.67px;height:1.07px;"></div>
<div class="abs rtxt clip" style="left:358.93px;width:36.27px;top:359px;height:18px;line-height:18px">899</div>
<div class="abs rtxt clip" style="left:413.33px;width:134.4px;top:359px;height:18px;line-height:18px">"Charles H" &lt;kirton@brightok.net&gt;</div>
<div class="abs rtxt clip" style="left:552.27px;width:74.36px;top:359px;height:18px;line-height:18px">19.01.2004</div>
<div class="abs rtxt clip" style="left:639.33px;width:55.62px;top:359px;height:18px;line-height:18px">16:48:33</div>
<div class="abs rtxt clip" style="left:709.33px;width:335.24px;top:359px;height:18px;line-height:18px">InternetRelatedNewsService - FTP Navigator</div>
<div class="abs sbtrack" style="left:1009.6px;top:106.4px;width:9.07px;height:270.93px;"></div>
<div class="abs sbbtn" style="left:1009.87px;top:106.93px;width:14.13px;height:15.33px;"><b class="up"></b></div>
<div class="abs sbbtn" style="left:1009.87px;top:122.67px;width:14.13px;height:9.33px;"></div>
<div class="abs sbbtn" style="left:1009.87px;top:362.4px;width:14.13px;height:14.93px;"><b class="dn"></b></div>
<div class="abs hsplit" style="left:276.8px;top:377.33px;width:741.87px;height:7.73px;"></div>
<div class="abs msghead" style="left:276.8px;top:385.07px;width:741.87px;height:29.87px;"></div>
<div class="abs" style="left:273.6px;top:382.67px;width:1.6px;height:1.6px;background:#223"></div>
<div class="abs" style="left:273.6px;top:386.4px;width:1.6px;height:1.6px;background:#223"></div>
<div class="abs" style="left:273.6px;top:390.13px;width:1.6px;height:1.6px;background:#223"></div>
<div class="abs" style="left:273.6px;top:393.87px;width:1.6px;height:1.6px;background:#223"></div>
<div class="abs" style="left:273.6px;top:397.6px;width:1.6px;height:1.6px;background:#223"></div>
<div class="abs" style="left:273.6px;top:401.33px;width:1.6px;height:1.6px;background:#223"></div>
<div class="abs" style="left:273.6px;top:405.07px;width:1.6px;height:1.6px;background:#223"></div>
<div class="abs" style="left:273.6px;top:408.8px;width:1.6px;height:1.6px;background:#223"></div>
<div class="abs" style="left:273.6px;top:412.53px;width:1.6px;height:1.6px;background:#223"></div>
<div class="abs rtxt" style="left:282.13px;top:381px;height:18px;line-height:18px">From:</div>
<div class="abs rtxt" style="transform:scaleX(.848);left:332.8px;top:381px;height:18px;line-height:18px">"halim" &lt;mohd_abd_halim@hotmail.com&gt;</div>
<div class="abs rtxt" style="left:282.13px;top:399px;height:18px;line-height:18px">Subject</div>
<div class="abs rtxt" style="left:330.13px;top:399px;height:18px;line-height:18px">InternetRelatedNewsService - DB Maker</div>
<div class="abs hbtn" style="left:937.6px;top:387.33px;width:25.33px;height:25.73px;"><div class="abs" style="left:-0.27px;top:-0.27px"><svg width="24" height="24" viewBox="0 0 24 24"><path d="M3 6 Q5 2.6 9 2.8 L14 2.8 L14 18 Q8 19.4 2.4 17.6Z" fill="#4fb0f3"/><path d="M3.6 7 Q5 4 9 4 L9 10.6 L3 12Z" fill="#94d2fa"/><path d="M12.4 8.6 Q12.4 7 13.8 7 Q15 7 15 8.6 L15.2 13 L19.4 14.4 Q20.6 15 20.4 16.6 L19.6 21 Q19.4 22.4 18 22.4 L13.6 22.4 Q12.6 22.4 12 21.4 L8.8 16.6 Q8.6 15 10 15 L12.4 16.6Z" fill="#fcc41c" stroke="#e8a000" stroke-width=".6"/></svg></div></div>
<div class="abs hbtn" style="left:967.2px;top:387.33px;width:25.33px;height:25.73px;"><div class="abs" style="left:-0.27px;top:-0.27px"><svg width="24" height="24" viewBox="0 0 24 24"><path d="M3 6 Q5 2.6 9 2.8 L14 2.8 L14 18 Q8 19.4 2.4 17.6Z" fill="#4fb0f3"/><path d="M3.6 7 Q5 4 9 4 L9 10.6 L3 12Z" fill="#94d2fa"/><path d="M11 4.6 Q15 1.6 19.6 3.4" stroke="#2a9a34" stroke-width="1.6" fill="none"/><rect x="17.4" y="2.6" width="4.6" height="3.6" fill="#2a9a34"/><circle cx="12.6" cy="14.6" r="6.6" fill="#9c92f0"/><ellipse cx="12.6" cy="18.6" rx="3" ry="1.4" fill="#5ea8f0"/><circle cx="10.4" cy="13.6" r=".9" fill="#d8d4fb"/><circle cx="14.8" cy="13.6" r=".9" fill="#d8d4fb"/></svg></div></div>
<div class="abs hbtn" style="left:996.8px;top:387.33px;width:25.33px;height:25.73px;"><div class="abs" style="left:-0.27px;top:-0.27px"><svg width="24" height="24" viewBox="0 0 24 24"><path d="M3 6 Q5 2.6 9 2.8 L14 2.8 L14 18 Q8 19.4 2.4 17.6Z" fill="#4fb0f3"/><path d="M3.6 7 Q5 4 9 4 L9 10.6 L3 12Z" fill="#94d2fa"/><path d="M7.0 9.45 L15.6 3.0 L24.2 9.45 L24.2 18.48 Q15.6 21.060000000000002 7.0 18.48 Z" fill="#fdc51c" stroke="#f2a900" stroke-width=".8"/><path d="M8.0 10.74 L15.6 14.61 L23.2 10.74" fill="none" stroke="#fde27a" stroke-width="1.3"/><path d="M8.2 18.049999999999997 L15.6 12.459999999999999 L23.0 18.049999999999997" fill="none" stroke="#f4a600" stroke-width="1"/><path d="M2 17.6 L24 16.4 L24 19.6 L2 20Z" fill="#3a2a1a"/><path d="M8 17.2 L20 16.6 L20 19 L8 19.6Z" fill="#e8742a"/></svg></div></div>
<div class="abs" style="left:276.8px;top:414.93px;width:741.87px;height:292px;background:#fff"></div>
<pre class="abs body" style="left:282.67px;top:422.27px">Comments:
--
ProductName: DB Maker
Company: home
FirstName: hali
LastName: hali
Country: malaysia
City:
Email: mohd_abd_halim@hot.com
URL: http://
Learned From:   ?
Bestname: Any
DesignRating: 5 - Excellent

--
User comes from address: 202.184.24.240
Using browser Mozilla/4.0 (compatible; MSIE 6.0; Windows NT 5.0; .NET CLR 1.0.3705)</pre>
<div class="abs sbtrack" style="left:1009.6px;top:416.8px;width:9.07px;height:289.6px;"></div>
<div class="abs sbbtn" style="left:1009.87px;top:417.33px;width:14.13px;height:15.33px;"><b class="up" style="border-bottom-color:#8a8a8a"></b></div>
<div class="abs sbbtn" style="left:1009.87px;top:690px;width:14.13px;height:15.73px;"><b class="dn" style="border-top-color:#8a8a8a"></b></div>
<div class="abs status" style="left:0px;top:706.8px;width:1018.67px;height:11.87px;"></div>
<div class="abs" style="left:161.2px;top:707.33px;width:1.07px;height:11.33px;background:#7fa6d8"></div>
<div class="abs" style="left:162.27px;top:707.33px;width:0.93px;height:11.33px;background:#dcebfb"></div>
<div class="abs" style="left:215.47px;top:707.33px;width:1.07px;height:11.33px;background:#7fa6d8"></div>
<div class="abs" style="left:216.53px;top:707.33px;width:0.93px;height:11.33px;background:#dcebfb"></div>
<div class="abs" style="left:271.47px;top:707.33px;width:1.07px;height:11.33px;background:#7fa6d8"></div>
<div class="abs" style="left:272.53px;top:707.33px;width:0.93px;height:11.33px;background:#dcebfb"></div>
<div class="abs" style="left:341.2px;top:707.33px;width:1.07px;height:11.33px;background:#7fa6d8"></div>
<div class="abs" style="left:342.27px;top:707.33px;width:0.93px;height:11.33px;background:#dcebfb"></div>
<div class="abs" style="left:406.8px;top:707.33px;width:1.07px;height:11.33px;background:#7fa6d8"></div>
<div class="abs" style="left:407.87px;top:707.33px;width:0.93px;height:11.33px;background:#dcebfb"></div>
<div class="abs stxt" style="left:363.73px;top:709.6px">0%</div>
<div class="abs stxt" style="left:426.67px;top:709.6px">"InternetSoft Support" &lt;support@internet-soft.com&gt;, SMTP:mail.internet-soft.com</div>
<div class="abs stxt" style="left:975.33px;top:709.6px">01:03:01</div>
<div class="abs sicon" style="left:780.8px;top:711.73px;width:14.93px;height:9.6px;"><i></i></div>
<div class="abs sicon" style="left:800.8px;top:711.73px;width:14.93px;height:9.6px;"><i></i></div>
<div class="abs sicon" style="left:820.8px;top:711.73px;width:14.93px;height:9.6px;"><i></i></div>
<div class="abs sicon" style="left:840.8px;top:711.73px;width:14.93px;height:9.6px;"><i></i></div>
<div class="abs sicon" style="left:860.8px;top:711.73px;width:14.93px;height:9.6px;"><i></i></div>
<div class="abs sicon" style="left:880.8px;top:711.73px;width:14.93px;height:9.6px;"><i></i></div>
<div class="abs sicon" style="left:900.8px;top:711.73px;width:14.93px;height:9.6px;"><i></i></div>
<div class="abs sicon last" style="left:920.8px;top:711.73px;width:14.93px;height:9.6px;"><i></i></div>
<div class="abs mshadow" style="left:612.4px;top:225.47px;width:246px;height:451.6px;"></div>
<div class="abs cmenu" style="left:609.73px;top:222.13px;width:245.73px;height:452px;"></div>
<div class="abs cgutter" style="left:610.8px;top:223.2px;width:24.13px;height:449.87px;"></div>
<div class="abs" style="left:637.73px;top:400.13px;width:213.33px;height:1.07px;background:#c5c9d2"></div>
<div class="abs" style="left:637.73px;top:401.2px;width:213.33px;height:0.93px;background:#fff"></div>
<div class="abs" style="left:637.73px;top:469.33px;width:213.33px;height:1.07px;background:#c5c9d2"></div>
<div class="abs" style="left:637.73px;top:470.4px;width:213.33px;height:0.93px;background:#fff"></div>
<div class="abs" style="left:637.73px;top:538.53px;width:213.33px;height:1.07px;background:#c5c9d2"></div>
<div class="abs" style="left:637.73px;top:539.6px;width:213.33px;height:0.93px;background:#fff"></div>
<div class="abs ctxt" style="color:#000;left:643.87px;top:224px;height:18px;line-height:18px">New Message</div>
<div class="abs ctxt" style="color:#000;left:643.87px;top:247px;height:18px;line-height:18px">View</div>
<div class="abs ctxt" style="color:#9a9a9a;left:643.87px;top:268px;height:18px;line-height:18px">Send Immediately</div>
<div class="abs ctxt" style="color:#000;left:643.87px;top:291px;height:18px;line-height:18px">Resend</div>
<div class="abs ctxt" style="color:#000;left:643.87px;top:312px;height:18px;line-height:18px">Reply</div>
<div class="abs ctxt" style="color:#000;left:643.87px;top:335px;height:18px;line-height:18px">Forward</div>
<div class="abs ctxt" style="color:#000;left:643.87px;top:356px;height:18px;line-height:18px">Delete</div>
<div class="abs ctxt" style="color:#9a9a9a;left:643.87px;top:379px;height:18px;line-height:18px">Delete All</div>
<div class="abs ctxt" style="color:#000;left:643.87px;top:404px;height:18px;line-height:18px">Transfer to ... -&gt;</div>
<div class="abs carr" style="left:844.53px;top:408.8px"></div>
<div class="abs ctxt" style="color:#000;left:643.87px;top:425px;height:18px;line-height:18px">Add email into Addressbook -&gt;</div>
<div class="abs carr" style="left:844.53px;top:430.8px"></div>
<div class="abs ctxt" style="color:#000;left:643.87px;top:448px;height:18px;line-height:18px">Add text into templates -&gt;</div>
<div class="abs carr" style="left:844.53px;top:452.8px"></div>
<div class="abs ctxt" style="color:#000;left:643.87px;top:473px;height:18px;line-height:18px">Download only headers</div>
<div class="abs ctxt" style="color:#000;left:643.87px;top:495px;height:18px;line-height:18px">Redownload selected messages</div>
<div class="abs ctxt" style="color:#000;left:643.87px;top:517px;height:18px;line-height:18px">Delete selected messages from server</div>
<div class="abs chl" style="left:611.47px;top:540.67px;width:242.67px;height:21.47px;"></div>
<div class="abs ctxt" style="color:#000;left:643.87px;top:541px;height:18px;line-height:18px">Change Label</div>
<div class="abs carr" style="left:844.53px;top:547.2px"></div>
<div class="abs ctxt" style="color:#000;left:643.87px;top:564px;height:18px;line-height:18px">Change Priority</div>
<div class="abs carr" style="left:844.53px;top:569.2px"></div>
<div class="abs ctxt" style="color:#000;left:643.87px;top:585px;height:18px;line-height:18px">Mark as</div>
<div class="abs carr" style="left:844.53px;top:591.2px"></div>
<div class="abs ctxt" style="color:#9a9a9a;left:643.87px;top:608px;height:18px;line-height:18px">Queueing</div>
<div class="abs ctxt" style="color:#000;left:643.87px;top:629px;height:18px;line-height:18px">Headers</div>
<div class="abs ctxt" style="color:#000;left:643.87px;top:652px;height:18px;line-height:18px">Decode</div>
<div class="abs mshadow" style="left:857.07px;top:542.53px;width:97.07px;height:46.27px;"></div>
<div class="abs cmenu" style="left:854.4px;top:539.2px;width:96.8px;height:46.67px;"></div>
<div class="abs cgutter" style="left:855.47px;top:540.27px;width:24px;height:44.53px;"></div>
<div class="abs chl" style="left:856px;top:540.67px;width:93.87px;height:21.47px;"></div>
<div class="abs ctxt" style="left:887.47px;top:541px;height:18px;line-height:18px">Color</div>
<div class="abs ctxt" style="left:887.47px;top:564px;height:18px;line-height:18px">Default</div>
</div></body></html>
